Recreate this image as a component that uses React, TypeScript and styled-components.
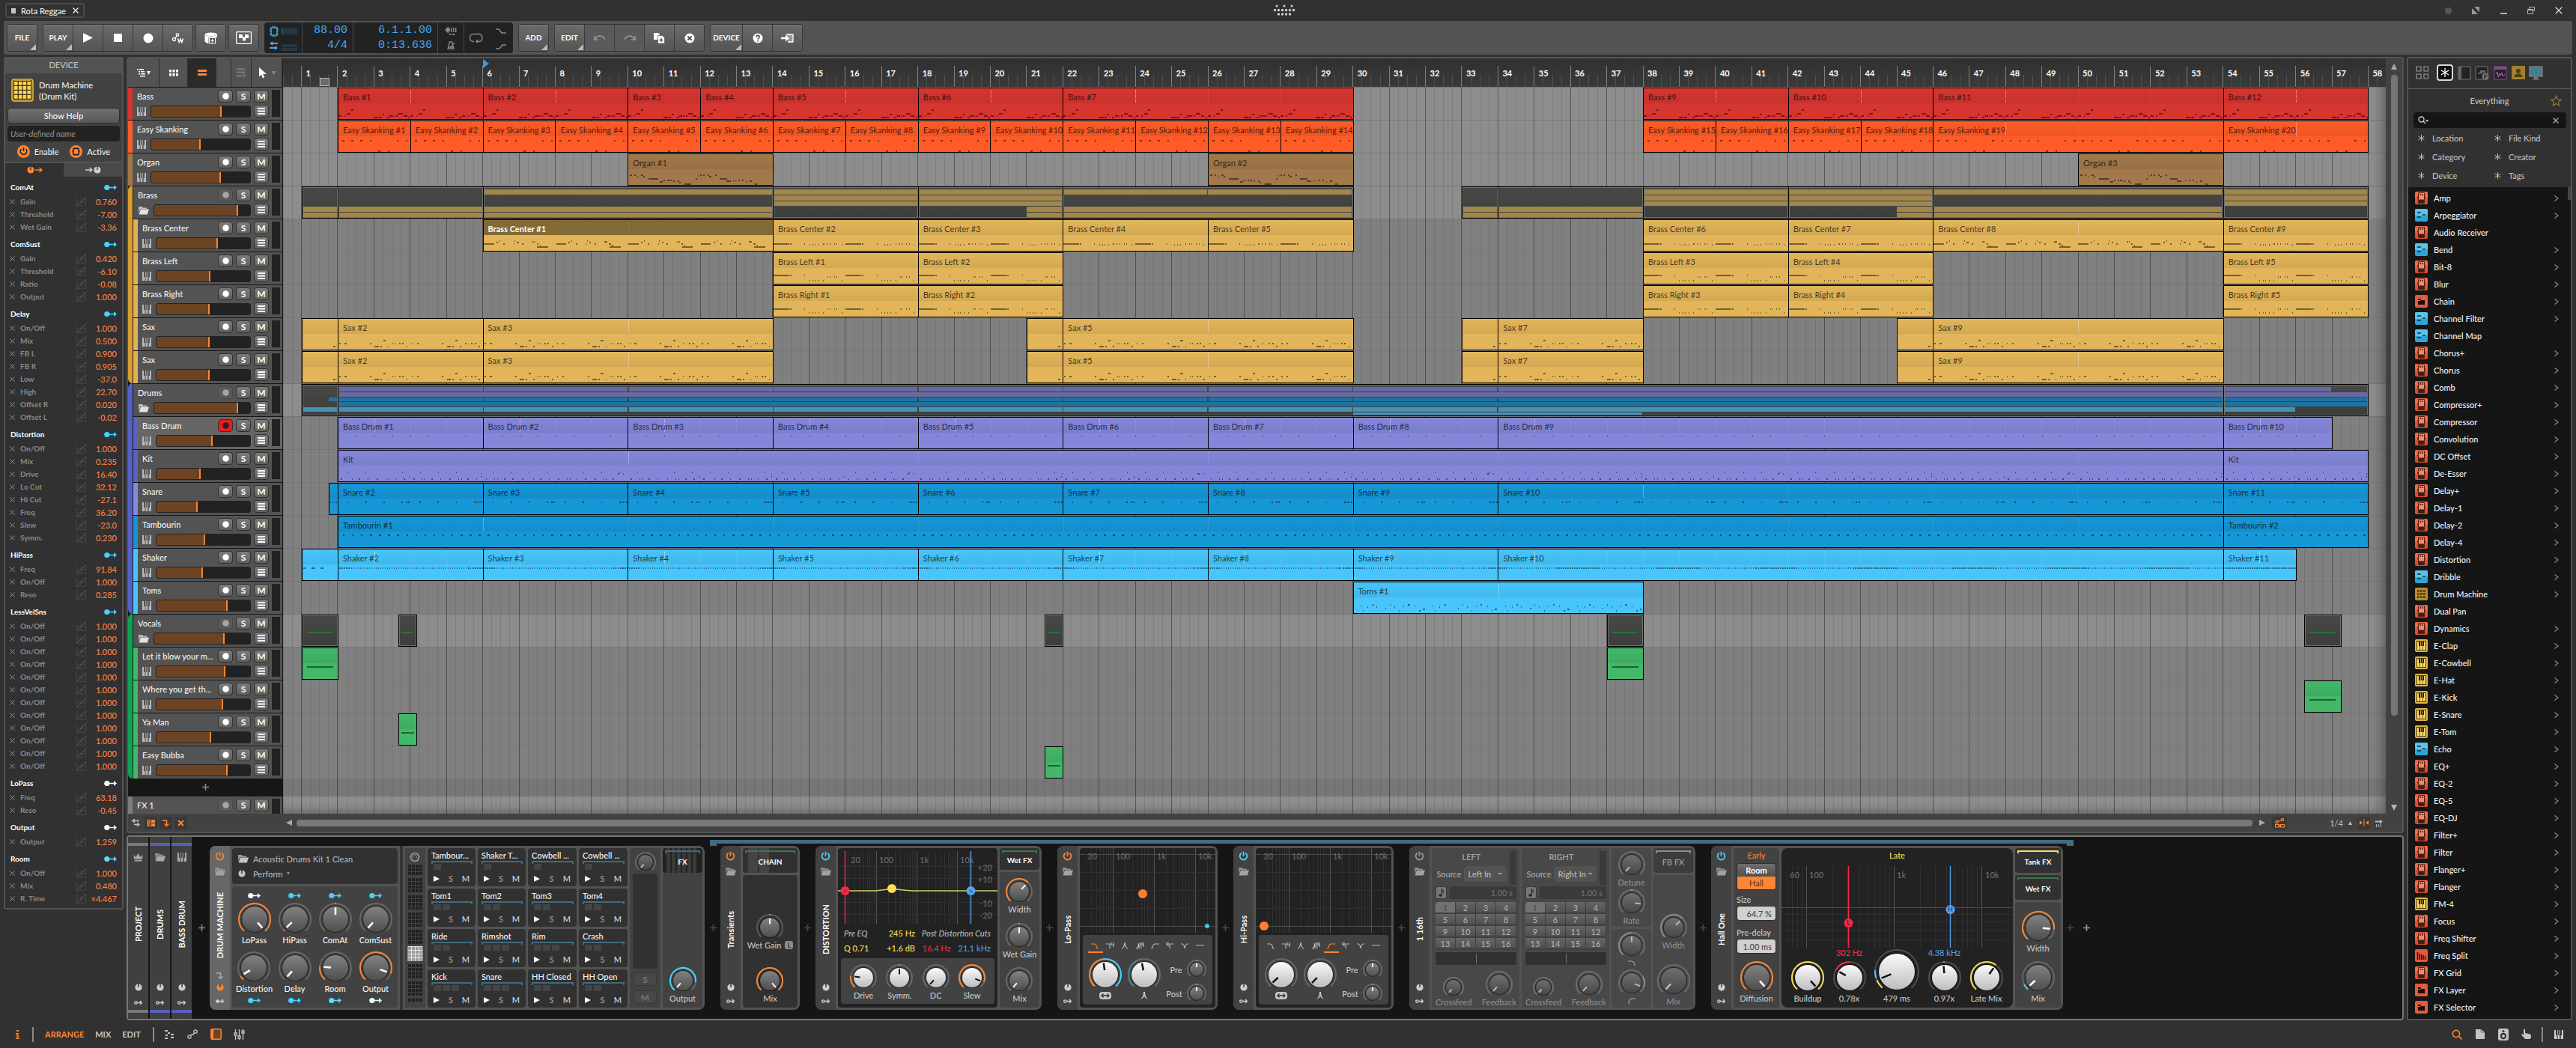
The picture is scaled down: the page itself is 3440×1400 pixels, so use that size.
import React from 'react';
import styled, { createGlobalStyle, css } from 'styled-components';

/* ------------------------------------------------------------------ */
/* Base                                                                */
/* ------------------------------------------------------------------ */

const Global = createGlobalStyle`
  *, *::before, *::after { box-sizing: border-box; }
  body { margin: 0; background: #313131; }
  body, button, input, select, label {
    font-family: Lato, "Open Sans", sans-serif;
    font-size: 11px;
    font-weight: 500;
    line-height: 13px;
    color: #e6e6e6;
  }
  button, input, select { margin: 0; padding: 0; border: 0; background: none; outline: 0; }
  button { cursor: pointer; display: inline-flex; align-items: center; justify-content: center; }
  svg { display: block; flex: none; }
  ul { margin: 0; padding: 0; list-style: none; }
  h2, h3 { margin: 0; font-size: 11px; line-height: 13px; font-weight: 500; }
`;

const ORANGE = '#ff8532';
const CYAN = '#44d3ff';
const BLUE = '#43a9f5';
const FRAME = '#535353';

const Page = styled.div`
  height: 100vh;
  display: flex;
  flex-direction: column;
  background: #313131;
  overflow: hidden;
`;

/* ------------------------------------------------------------------ */
/* Icons                                                               */
/* ------------------------------------------------------------------ */

type IconProps = { c?: string; s?: number };

const Power = ({ c = ORANGE }: IconProps) => (
  <svg width="13" height="13" viewBox="0 0 13 13" fill="none" stroke={c} strokeWidth="1.8">
    <path d="M3.8 2.6a4.9 4.9 0 1 0 5.4 0M6.5 .8v5.6" />
  </svg>
);
const Folder = ({ c = '#a9a9a9' }: IconProps) => (
  <svg width="15" height="12" viewBox="0 0 15 12">
    <path d="M1 1h5l1 1.5h5V4H3.5L1.5 10z" fill={c} opacity=".75" />
    <path d="M4 4.5h11L12.8 11.5H1.6z" fill={c} />
  </svg>
);
const Piano = ({ c = '#b8b8b8' }: IconProps) => (
  <svg width="12" height="12" viewBox="0 0 12 12">
    <path d="M0 0h2v7h1.3v5H0zM4.3 7V0h.9v7h1.6V0h.9v7h-.6v5H4.9V7zM10 0h2v12H8.7V7H10z" fill={c} />
    <path d="M3.6 7h.6v5h-.6zM4.9 7h2.2v5H4.9z" fill={c} />
  </svg>
);
const MiniKnob = ({ c = '#cfcfcf' }: IconProps) => (
  <svg width="10" height="10" viewBox="0 0 10 10">
    <circle cx="5" cy="5" r="4.6" fill={c} />
    <path d="M5 0v5" stroke="#333" strokeWidth="1.4" />
  </svg>
);
const ModArrow = ({ c = CYAN }: IconProps) => (
  <svg width="17" height="9" viewBox="0 0 17 9">
    <circle cx="3.8" cy="4.5" r="3.6" fill={c} />
    <path d="M7 3.8h6V1l4 3.5-4 3.5V5.2H7z" fill={c} />
  </svg>
);
const ModMini = ({ c = '#cfcfcf', filled = false }: IconProps & { filled?: boolean }) => (
  <svg width="11" height="7" viewBox="0 0 11 7" fill="none" stroke={c} strokeWidth="1.3">
    <circle cx="2.4" cy="3.5" r="1.7" fill={filled ? c : 'none'} />
    <path d="M4.2 3.5h6M8 1l2.4 2.5L8 6" />
  </svg>
);
const CornerArrow = ({ c = '#b5b5b5' }: IconProps) => (
  <svg width="11" height="11" viewBox="0 0 11 11" fill="none" stroke={c} strokeWidth="1.5">
    <path d="M1 2h5.5v7M3.6 6.4l2.9 3 2.9-3" />
  </svg>
);
const PlusIcon = ({ c = '#8b8b8b' }: IconProps) => (
  <svg width="9" height="9" viewBox="0 0 9 9" stroke={c} strokeWidth="1.6">
    <path d="M4.5 0v9M0 4.5h9" />
  </svg>
);
const Tri = ({ d, c = '#a8a8a8', s = 8 }: IconProps & { d: 'u' | 'd' | 'l' | 'r' }) => {
  const p = { u: 'M0 8L4 0l4 8z', d: 'M0 0h8L4 8z', l: 'M8 0v8L0 4z', r: 'M0 0l8 4-8 4z' }[d];
  return <svg width={s} height={s} viewBox="0 0 8 8"><path d={p} fill={c} /></svg>;
};
const Cross = ({ c = '#9a9a9a', s = 8 }: IconProps) => (
  <svg width={s} height={s} viewBox="0 0 8 8" stroke={c} strokeWidth="1.1"><path d="M.5.5l7 7M7.5.5l-7 7" /></svg>
);
const Aster = ({ c = '#c2c2c2', s = 10 }: IconProps) => (
  <svg width={s} height={s} viewBox="0 0 10 10" stroke={c} strokeWidth="1.1"><path d="M5 0v10M.7 2.5l8.6 5M9.3 2.5l-8.6 5" /></svg>
);

/* ------------------------------------------------------------------ */
/* Title bar                                                           */
/* ------------------------------------------------------------------ */

const TitleBar = styled.header`
  flex: none;
  height: 28px;
  display: grid;
  grid-template-columns: 1fr auto 1fr;
  align-items: center;
  padding: 0 17px 0 7px;
`;
const ProjectTab = styled.div`
  justify-self: start;
  display: flex;
  align-items: center;
  gap: 7px;
  height: 20px;
  padding: 0 4px 0 6px;
  border: 2px solid #4a4a4a;
  border-radius: 4px;
  color: #f0f0f0;
`;
const TabDot = styled.span`
  width: 6px;
  height: 7px;
  background: #c8c8c8;
`;
const WindowButtons = styled.div`
  justify-self: end;
  display: flex;
  align-items: center;
  gap: 25px;
`;
const IconButton = styled.button`
  min-width: 12px;
  height: 14px;
`;

const Title = () => (
  <TitleBar>
    <ProjectTab>
      <TabDot />
      <span>Rota Reggae</span>
      <IconButton aria-label="Close project"><Cross c="#fff" /></IconButton>
    </ProjectTab>
    <svg width="30" height="16" viewBox="0 0 30 16" fill="#d0d0d0">
      {[4, 14, 24].map(x => <circle key={'a' + x} cx={x + 1} cy="2" r="1.5" />)}
      {[0, 5, 10, 15, 20, 25].map(x => <circle key={'b' + x} cx={x + 2.5} cy="7.5" r="1.7" />)}
      {[5, 10, 15, 20].map(x => <circle key={'c' + x} cx={x + 2.5} cy="13" r="1.7" />)}
    </svg>
    <WindowButtons>
      <IconButton aria-label="Status"><svg width="9" height="9"><circle cx="4.5" cy="4.5" r="4.5" fill="#555" /></svg></IconButton>
      <IconButton aria-label="Full screen"><svg width="10" height="10" viewBox="0 0 10 10" fill="#9a9a9a"><path d="M3 0h7v7zM0 2l8 8H0z" /></svg></IconButton>
      <IconButton aria-label="Minimize"><svg width="9" height="10"><path d="M0 8h9v2H0z" fill="#b5b5b5" /></svg></IconButton>
      <IconButton aria-label="Restore"><svg width="10" height="10" viewBox="0 0 10 10" fill="none" stroke="#b5b5b5"><path d="M2.5 3V.5h7v5H8M.5 3.5h7v6h-7zM.5 4.5h7" /></svg></IconButton>
      <IconButton aria-label="Close"><Cross c="#e8e8e8" s={10} /></IconButton>
    </WindowButtons>
  </TitleBar>
);

/* ------------------------------------------------------------------ */
/* Transport toolbar                                                   */
/* ------------------------------------------------------------------ */

const Bar = styled.div`
  flex: none;
  display: flex;
  align-items: center;
  gap: 7px;
  height: 45px;
  margin: 0 5px 3px;
  padding: 0 4px;
  background: ${FRAME};
  border-radius: 3px;
`;
const Near = styled.div`
  display: flex;
  gap: 3px;
`;
const ToolGroup = styled.div`
  display: flex;
  height: 37px;
  border: solid #333;
  border-width: 1px 0;
  border-radius: 4px;
  overflow: hidden;
`;
const Tool = styled.button<{ $menu?: boolean; $dim?: boolean; $w?: number }>`
  position: relative;
  width: ${p => p.$w ?? 40}px;
  background: ${p => (p.$dim ? '#5a5a5a' : 'linear-gradient(#777 0, #6a6a6a 2px, #555)')};
  border-right: 1px solid #3a3a3a;
  color: #fff;
  font-size: 10px;
  font-weight: 700;
  &:first-child { border-left: 1px solid #3a3a3a; width: ${p => (p.$w ?? 40) + 1}px; }
  ${p => p.$menu && css`
    &::after {
      content: '';
      position: absolute;
      right: 1px;
      bottom: 1px;
      border: 4px solid transparent;
      border-right-color: #bbb;
      border-bottom-color: #bbb;
    }
  `}
`;
const Display = styled.div`
  display: grid;
  grid-template-columns: 50px 68px 113px 35px 1fr;
  width: 332px;
  height: 41px;
  background: #222;
  border-radius: 4px;
  font-family: "Liberation Mono", monospace;
  font-size: 15px;
  line-height: 20px;
  color: ${BLUE};
`;
const Cell = styled.div<{ $center?: boolean }>`
  display: flex;
  flex-direction: column;
  justify-content: center;
  align-items: ${p => (p.$center ? 'center' : 'flex-end')};
  gap: ${p => (p.$center ? 8 : 0)}px;
  padding-right: ${p => (p.$center ? 0 : 7)}px;
  border-left: 1px solid #484848;
  &:first-child { border-left: 0; }
`;
const LoopCell = styled.div`
  display: grid;
  grid-template-columns: 1fr 1fr;
  justify-items: center;
  align-items: center;
  border-left: 1px solid #484848;
`;

const Toolbar = () => (
  <Bar>
    <ToolGroup><Tool $menu>FILE</Tool></ToolGroup>
    <Near>
      <ToolGroup>
        <Tool $menu>PLAY</Tool>
        <Tool aria-label="Play"><Tri d="r" c="#fff" s={13} /></Tool>
        <Tool aria-label="Stop"><svg width="11" height="11"><path d="M0 0h11v11H0z" fill="#fff" /></svg></Tool>
        <Tool aria-label="Record"><svg width="14" height="14"><circle cx="7" cy="7" r="6.5" fill="#fff" /></svg></Tool>
        <Tool aria-label="Automation write">
          <svg width="16" height="14" viewBox="0 0 16 14" fill="none" stroke="#fff" strokeWidth="1.3">
            <circle cx="2.5" cy="8.5" r="2" /><circle cx="7" cy="2.5" r="1.7" /><path d="M4 7l2-3" />
            <path d="M7.5 7.5l1.7 5L11 8l1.8 4.5 1.7-5" strokeWidth="1.5" />
          </svg>
        </Tool>
      </ToolGroup>
      <ToolGroup>
        <Tool aria-label="Overdub">
          <svg width="18" height="16" viewBox="0 0 18 16">
            <path d="M.5 3.5v9c2 1.8 4 2.5 5 2.6V7H17V3.5C14.5 6 3 6 .5 3.5z" fill="#fff" />
            <ellipse cx="8.8" cy="2.8" rx="8.3" ry="2.3" fill="#fff" />
            <path d="M6.5 7.5h8v7.5h-8z" fill="#555" stroke="#fff" /><path d="M10.5 9v4.5M8.3 11.3h4.5" stroke="#fff" strokeWidth="1.3" />
          </svg>
        </Tool>
      </ToolGroup>
      <ToolGroup>
        <Tool aria-label="Dashboard">
          <svg width="21" height="17" viewBox="0 0 21 17"><rect x=".6" y=".6" width="19.8" height="15.8" rx="1" fill="none" stroke="#fff" strokeWidth="1.2" /><path d="M4 4h5v3.5h3V4h5v5h-4v3.5H9V9H4z" fill="#fff" /></svg>
        </Tool>
      </ToolGroup>
    </Near>
    <Display>
      <Cell $center>
        <svg width="38" height="34" viewBox="0 0 38 34">
          <rect x="3" y="3" width="8" height="10" fill="none" stroke={BLUE} strokeWidth="1.5" />
          <path d="M5 .5v15M7 .5v15M9 .5v15" stroke={BLUE} strokeDasharray="2 11" />
          <path d="M1 5h12M1 8h12M1 11h12" stroke={BLUE} strokeDasharray="2 8" />
          <path d="M17 3h21v9H17zM17 25h21v4H17zM17 30h21v4H17z" fill="#263743" /><path d="M17 3h1v9h-1z" fill="#2a6f80" />
          <path d="M5 21L1 24l4 3v-2h7v-2H5zM8 27v2H1v2h7v2l4-3z" fill={BLUE} />
        </svg>
      </Cell>
      <Cell><span>88.00</span><span>4/4</span></Cell>
      <Cell><span>6.1.1.00</span><span>0:13.636</span></Cell>
      <Cell $center>
        <svg width="16" height="12" viewBox="0 0 16 12" fill="#8a8a8a"><path d="M0 5l5-5v3h2v4H5v3zM8 2h1.5v6H8zM11 2h1.5v6H11zM14 2h1.5v6H14zM6 10h2v2H6zM10 10h3v2h-3z" /></svg>
        <svg width="10" height="11" viewBox="0 0 10 11" fill="none" stroke="#8a8a8a" strokeWidth="1.3"><path d="M3.5 1L1 10h8L6.5 1zM4.5 9L10 2M1.5 8h7" /></svg>
      </Cell>
      <LoopCell>
        <svg width="18" height="13" viewBox="0 0 18 13" fill="none" stroke="#8a8a8a" strokeWidth="1.5"><path d="M6 11.5H5a4.5 5 0 0 1 0-10h8a4 5 0 0 1 0 10H9M11.5 9L9 11.5 11.5 13" /></svg>
        <svg width="14" height="34" viewBox="0 0 14 34" fill="none" stroke="#8a8a8a" strokeWidth="1.5"><path d="M0 5h4l4 5h6M0 31h5l4-5h5" /></svg>
      </LoopCell>
    </Display>
    <ToolGroup><Tool $menu>ADD</Tool></ToolGroup>
    <ToolGroup>
      <Tool $menu>EDIT</Tool>
      <Tool $dim aria-label="Undo"><svg width="16" height="9" viewBox="0 0 16 9" fill="none" stroke="#999" strokeWidth="1.5"><path d="M1 2v5h5M1.5 6C5 1 11 0 15 6.5" /></svg></Tool>
      <Tool $dim aria-label="Redo"><svg width="16" height="9" viewBox="0 0 16 9" fill="none" stroke="#999" strokeWidth="1.5"><path d="M15 2v5h-5M14.5 6C11 1 5 0 1 6.5" /></svg></Tool>
      <Tool aria-label="Duplicate"><svg width="15" height="14" viewBox="0 0 15 14"><path d="M0 0h6l2 2v7H0z" fill="#fff" /><path d="M5.5 3.5h6l3 3v7.5h-9z" fill="#fff" stroke="#666" strokeWidth=".8" /><path d="M10 7v5M7.5 9.5h5" stroke="#555" strokeWidth="1.3" /></svg></Tool>
      <Tool aria-label="Delete"><svg width="14" height="14" viewBox="0 0 14 14"><circle cx="7" cy="7" r="6.5" fill="#fff" /><path d="M4.3 4.3l5.4 5.4M9.7 4.3L4.3 9.7" stroke="#444" strokeWidth="1.8" /></svg></Tool>
    </ToolGroup>
    <ToolGroup>
      <Tool $menu $w={43}>DEVICE</Tool>
      <Tool aria-label="Help"><svg width="14" height="14" viewBox="0 0 14 14"><circle cx="7" cy="7" r="6.5" fill="#fff" /><path d="M4.8 5.5c0-3 4.6-2.7 4.3-.2C9 6.8 7 6.8 7 8.6M7 10v1.5" fill="none" stroke="#444" strokeWidth="1.6" /></svg></Tool>
      <Tool aria-label="Insert device"><svg width="17" height="12" viewBox="0 0 17 12"><path d="M7 1h9v10H9" fill="#999" stroke="#fff" strokeWidth="1.3" /><path d="M0 4.8h6V1.5l5 4.5-5 4.5V7.2H0z" fill="#fff" /></svg></Tool>
    </ToolGroup>
  </Bar>
);

/* ------------------------------------------------------------------ */
/* Inspector                                                           */
/* ------------------------------------------------------------------ */

const Main = styled.main`
  flex: 1;
  min-height: 0;
  display: grid;
  grid-template-columns: 160px minmax(0, 1fr) 221px;
  gap: 4px;
  padding: 0 5px;
`;
const Inspector = styled.aside`
  align-self: start;
  border: 2px solid ${FRAME};
  border-radius: 3px;
  padding-bottom: 4px;
`;
const InspectorTitle = styled.h2`
  height: 20px;
  background: ${FRAME};
  color: #c4c4c4;
  text-align: center;
  line-height: 18px;
`;
const InspectorTop = styled.div`
  display: flex;
  flex-direction: column;
  gap: 3px;
  padding: 7px 3px 3px;
  background: #424242;
  border-bottom: 2px solid ${FRAME};
`;
const DeviceIdent = styled.div`
  display: flex;
  align-items: center;
  gap: 7px;
  padding: 0 5px 5px;
  line-height: 15px;
  color: #f0f0f0;
`;
const HelpButton = styled.button`
  height: 21px;
  background: linear-gradient(#707070, #575757);
  border: 1px solid #2e2e2e;
  border-radius: 4px;
  color: #f4f4f4;
`;
const NameInput = styled.input`
  height: 21px;
  padding: 0 4px;
  background: #222;
  border-radius: 4px;
  font-style: italic;
  &::placeholder { color: #8c8c8c; opacity: 1; }
`;
const Switches = styled.div`
  display: flex;
  justify-content: center;
  gap: 15px;
  padding: 2px 0;
`;
const SwitchButton = styled.button`
  gap: 6px;
  color: #ededed;
`;
const InspectorTabs = styled.div`
  display: grid;
  grid-template-columns: 1fr 1fr;
`;
const InspectorTab = styled.button<{ $on?: boolean }>`
  height: 18px;
  gap: 1px;
  background: ${p => (p.$on ? '#313131' : '#494949')};
`;
const ParamHead = styled.h3`
  display: flex;
  justify-content: space-between;
  align-items: center;
  height: 25px;
  padding: 3px 7px 0;
  font-size: 10px;
  font-weight: 700;
  color: #fff;
`;
const ParamRow = styled.li`
  display: grid;
  grid-template-columns: 14px 1fr 14px 40px;
  align-items: center;
  height: 17px;
  padding: 0 7px 0 6px;
  font-size: 10px;
  font-weight: 700;
  color: #8a8a8a;
`;
const ParamValue = styled.span`
  text-align: right;
  font-size: 11px;
  font-weight: 500;
  color: #ff8142;
`;

const PARAMS: [string, string, [string, string][]][] = [
  ['ComAt', CYAN, [['Gain', '0.760'], ['Threshold', '-7.00'], ['Wet Gain', '-3.36']]],
  ['ComSust', CYAN, [['Gain', '0.420'], ['Threshold', '-6.10'], ['Ratio', '-0.08'], ['Output', '1.000']]],
  ['Delay', CYAN, [['On/Off', '1.000'], ['Mix', '0.500'], ['FB L', '0.900'], ['FB R', '0.905'], ['Low', '-37.0'], ['High', '22.70'], ['Offset R', '0.020'], ['Offset L', '-0.02']]],
  ['Distortion', CYAN, [['On/Off', '1.000'], ['Mix', '0.235'], ['Drive', '16.40'], ['Lo Cut', '32.12'], ['Hi Cut', '-27.1'], ['Freq', '36.20'], ['Slew', '-23.0'], ['Symm.', '0.230']]],
  ['HiPass', CYAN, [['Freq', '91.84'], ['On/Off', '1.000'], ['Reso', '0.285']]],
  ['LessVelSns', CYAN, Array.from({ length: 12 }, () => ['On/Off', '1.000'] as [string, string])],
  ['LoPass', '#fff', [['Freq', '63.18'], ['Reso', '-0.45']]],
  ['Output', '#e6faff', [['Output', '1.259']]],
  ['Room', '#5fd9ff', [['On/Off', '1.000'], ['Mix', '0.480'], ['R. Time', '×4.467']]],
];

const DrumIcon = () => (
  <svg width="30" height="31" viewBox="0 0 30 31">
    <rect x="1" y="1" width="28" height="29" rx="3" fill="#3a2f10" stroke="#e9bd45" strokeWidth="1.5" />
    {[0, 1, 2, 3].map(r => [0, 1, 2, 3].map(c => <rect key={`${r}${c}`} x={4 + c * 5.8} y={4 + r * 6} width="4.6" height="4.8" fill="#ffd35a" />))}
    <rect x="2.5" y="2.5" width="25" height="26" rx="2" fill="none" stroke="#c79a2d" />
  </svg>
);

const InspectorPanel = () => (
  <Inspector>
    <InspectorTitle>DEVICE</InspectorTitle>
    <InspectorTop>
      <DeviceIdent><DrumIcon /><span>Drum Machine<br />(Drum Kit)</span></DeviceIdent>
      <HelpButton>Show Help</HelpButton>
      <NameInput placeholder="User-defined name" aria-label="User-defined name" />
      <Switches>
        <SwitchButton>
          <svg width="17" height="17" viewBox="0 0 17 17"><circle cx="8.5" cy="8.5" r="8.5" fill={ORANGE} /><path d="M5.5 5a4.3 4.3 0 1 0 6 0M8.5 3v5" fill="none" stroke="#222" strokeWidth="1.5" /></svg>
          Enable
        </SwitchButton>
        <SwitchButton>
          <svg width="17" height="17" viewBox="0 0 17 17"><circle cx="8.5" cy="8.5" r="8.5" fill={ORANGE} /><rect x="5" y="4.5" width="7" height="8" fill="none" stroke="#222" strokeWidth="1.4" /><path d="M6.5 3v11M8.5 3v11M10.5 3v11" stroke="#222" strokeDasharray="1.5 8" /><path d="M3.5 6.5h10M3.5 8.5h10M3.5 10.5h10" stroke="#222" strokeDasharray="1.5 7" /></svg>
          Active
        </SwitchButton>
      </Switches>
    </InspectorTop>
    <InspectorTabs>
      <InspectorTab $on aria-label="Outgoing"><MiniKnob c={ORANGE} /><svg width="10" height="8" fill="none" stroke={ORANGE} strokeWidth="1.4"><path d="M0 4h8M5.5 1L9 4 5.5 7" /></svg></InspectorTab>
      <InspectorTab aria-label="Incoming"><svg width="10" height="8" fill="none" stroke="#cfcfcf" strokeWidth="1.4"><path d="M0 4h8M5.5 1L9 4 5.5 7" /></svg><MiniKnob /></InspectorTab>
    </InspectorTabs>
    {PARAMS.map(([name, color, rows]) => (
      <section key={name}>
        <ParamHead>{name}<ModArrow c={color} /></ParamHead>
        <ul>
          {rows.map(([label, value], i) => (
            <ParamRow key={i}>
              <Cross s={7} />
              <span>{label}</span>
              <svg width="13" height="13" viewBox="0 0 13 13" stroke="#4b4b4b" fill="none"><path d="M.5.5v12h12V.5M.5 6.5h12M6.5 3v9" opacity=".7" /><path d="M.5 12.5l12-12" stroke="#5e5e5e" /></svg>
              <ParamValue>{value}</ParamValue>
            </ParamRow>
          ))}
        </ul>
      </section>
    ))}
  </Inspector>
);

/* ------------------------------------------------------------------ */
/* Arrangement data                                                    */
/* ------------------------------------------------------------------ */

type Note = [number, number, number];
type Clip = { from: number; to: number; name?: string; selected?: boolean; dark?: boolean };
type Track = {
  name: string; stripe: string; level: number; color: string;
  clips: Clip[]; notes?: Note[]; period?: number; loop?: number;
  child?: boolean; group?: boolean; armed?: boolean; kids?: Track[];
};

const FIRST_BAR = 0.494;
const BARS = 57.992;
const pct = (bar: number) => ((bar - FIRST_BAR) / BARS) * 100;

/* Consecutive clips: run('Bass', 1, [2, 6, 10]) gives #1 at 2–6 and #2 at 6–10. */
const run = (name: string, first: number, edges: number[]): Clip[] =>
  edges.slice(0, -1).map((from, i) => ({ from, to: edges[i + 1], name: `${name} #${first + i}` }));
const every = (step: number, start: number, end: number, w: number, y: number): Note[] =>
  Array.from({ length: Math.round((end - start) / step) }, (_, i) => [start + i * step, w, y] as Note);

const N_BASS: Note[] = [[0, .08, 36], [.16, .03, 36], [.23, .1, 33], [.35, .06, 28], [.98, .13, 38], [1.13, .07, 38], [1.22, .05, 34], [1.35, .06, 38], [1.42, .09, 36], [1.53, .03, 36], [1.6, .04, 36], [1.67, .12, 33], [1.8, .1, 36], [1.94, .04, 38]];
const N_SKANK: Note[] = [[.11, .05, 25], [.36, .05, 25], [.61, .05, 25], [.87, .05, 25], [1.62, .05, 25], [1.88, .05, 25], [1.11, .05, 39], [1.37, .05, 39]];
const N_ORGAN: Note[] = [[.05, .05, 27], [.16, .05, 27], [.24, .03, 29], [.36, .05, 27], [.42, .03, 29], [.56, .27, 32], [.87, .08, 36], [.97, .02, 34], [1, .02, 34], [1.07, .05, 34], [1.15, .05, 34], [1.25, .03, 35], [1.37, .05, 35], [1.42, .03, 37], [1.55, .19, 39], [1.87, .04, 32], [1.94, .02, 28], [2, .04, 27], [2.08, .04, 27], [2.2, .04, 27], [2.25, .05, 29], [2.4, .05, 27], [2.54, .21, 32], [2.73, .11, 35], [2.9, .02, 35], [2.96, .02, 34], [3.05, .04, 34], [3.16, .04, 34], [3.25, .03, 36], [3.37, .06, 35], [3.5, .08, 39]];
const N_CENTER_LONG: Note[] = [[0, .28, 31], [.35, .04, 29], [.43, .02, 27], [.54, .04, 31], [.82, .02, 31], [.85, .02, 27], [.92, .05, 29], [1.06, .04, 31], [1.34, .05, 28], [1.4, .02, 28], [1.46, .05, 31], [1.55, .03, 33], [1.48, .3, 35]];
const N_CENTER: Note[] = [[0, .43, 31], [.46, .03, 31], [.86, .02, 31], [1, .02, 32], [1.07, .02, 32], [1.15, .02, 32], [1.24, .02, 32], [1.38, .03, 31], [1.48, .02, 31], [1.56, .02, 31], [1.68, .02, 31], [1.75, .02, 31], [1.88, .03, 32]];
const N_LEFT: Note[] = [[0, .43, 29], [.46, .03, 29], [.86, .02, 29], [.98, .02, 36], [1.07, .02, 36], [1.15, .02, 36], [1.24, .02, 36], [1.38, .02, 36], [1.5, .02, 31], [1.56, .02, 31], [1.68, .02, 31], [1.75, .02, 31], [1.88, .02, 36]];
const N_RIGHT: Note[] = N_LEFT.map(([x, w, y]) => [x, w, y === 36 ? 35 : 30]);
const N_SAX: Note[] = [[.03, .03, 32], [.17, .05, 32], [.87, .04, 32], [1, .12, 36], [1.16, .04, 36], [1.24, .07, 28], [1.37, .03, 36], [1.5, .02, 32], [1.56, .02, 32], [1.68, .04, 32], [1.77, .04, 32], [1.88, .04, 36]];
const N_KIT: Note[] = [...every(.5, .25, 8, .02, 28), ...every(.5, .06, 8, .04, 37), ...every(.5, .3, 8, .02, 37), ...every(1, .38, 8, .02, 37), ...every(1, .8, 8, .03, 37), ...every(2, 1.94, 8, .02, 34), [3.95, .02, 30], [7.7, .05, 30], [7.86, .02, 30]];
const N_SNARE: Note[] = [[.25, .03, 24], [.75, .03, 24], [1.25, .03, 24], [1.75, .03, 24], [1.87, .04, 24], [1.94, .04, 24], [2.25, .03, 24], [2.75, .03, 24], [3.25, .03, 24], [3.75, .04, 24], [3.82, .03, 24], [3.87, .03, 24], [3.94, .04, 24]];
const N_TOMS: Note[] = [[.18, .02, 31], [.24, .02, 37], [.37, .02, 32], [.5, .04, 29], [.62, .02, 32], [.87, .03, 34], [1, .02, 29], [1.12, .02, 32], [1.25, .02, 37], [1.37, .02, 31], [1.5, .05, 29], [1.68, .02, 31], [1.8, .04, 37], [1.9, .06, 35]];
const N_VOX: Note[] = [[.12, .74, 24]];

const GOLD = '#e2b55a';
const VIOLET = '#8487d9';
const SEA = '#1697d8';
const SKY = '#47c5fc';
const GREEN = '#42b868';

const four = [2, 6, 10, 14, 18, 22, 26, 30, 34, 54];
const saxClips: Clip[] = [
  { from: 1, to: 2 }, { from: 2, to: 6, name: 'Sax #2' }, { from: 6, to: 14, name: 'Sax #3' },
  { from: 21, to: 22 }, { from: 22, to: 30, name: 'Sax #5' },
  { from: 33, to: 34 }, { from: 34, to: 38, name: 'Sax #7' },
  { from: 45, to: 46 }, { from: 46, to: 54, name: 'Sax #9' },
];
const dark = (edges: [number, number][]): Clip[] => edges.map(([from, to]) => ({ from, to, dark: true }));

const brassKids: Track[] = [
  { name: 'Brass Center', stripe: '#e0b157', level: 65, color: GOLD, notes: N_CENTER, period: 2, loop: 4, child: true,
    clips: [{ from: 6, to: 14, name: 'Brass Center #1', selected: true }, ...run('Brass Center', 2, [14, 18, 22, 26, 30]), ...run('Brass Center', 6, [38, 42, 46, 54, 58])] },
  { name: 'Brass Left', stripe: '#e0b157', level: 57, color: GOLD, notes: N_LEFT, period: 2, child: true,
    clips: [...run('Brass Left', 1, [14, 18, 22]), ...run('Brass Left', 3, [38, 42, 46]), ...run('Brass Left', 5, [54, 58])] },
  { name: 'Brass Right', stripe: '#e0b157', level: 56, color: GOLD, notes: N_RIGHT, period: 2, child: true,
    clips: [...run('Brass Right', 1, [14, 18, 22]), ...run('Brass Right', 3, [38, 42, 46]), ...run('Brass Right', 5, [54, 58])] },
  { name: 'Sax', stripe: '#e0b157', level: 56, color: GOLD, notes: N_SAX, period: 2, loop: 4, child: true, clips: saxClips },
  { name: 'Sax', stripe: '#e0b157', level: 56, color: GOLD, notes: N_SAX, period: 2, loop: 4, child: true, clips: saxClips },
];
const drumKids: Track[] = [
  { name: 'Bass Drum', stripe: '#5a62be', level: 59, color: VIOLET, notes: every(.5, .5, 4, .02, 24), period: 4, loop: 1, child: true, armed: true,
    clips: [...run('Bass Drum', 1, four), { from: 54, to: 57, name: 'Bass Drum #10' }] },
  { name: 'Kit', stripe: '#5a62be', level: 46, color: VIOLET, notes: N_KIT, period: 8, loop: 8, child: true,
    clips: [{ from: 2, to: 54, name: 'Kit' }, { from: 54, to: 58, name: 'Kit' }] },
  { name: 'Snare', stripe: '#8a88da', level: 43, color: SEA, notes: N_SNARE, period: 4, loop: 4, child: true,
    clips: [{ from: 1.75, to: 2 }, ...run('Snare', 2, four), { from: 54, to: 58, name: 'Snare #11' }] },
  { name: 'Tambourin', stripe: '#1794d3', level: 51, color: SEA, notes: every(.25, .12, 4, .05, 24), period: 4, loop: 4, child: true,
    clips: run('Tambourin', 1, [2, 54, 58]) },
  { name: 'Shaker', stripe: SKY, level: 49, color: SKY, notes: every(.0625, .03, 1, .03, 24), period: 1, loop: 1, child: true,
    clips: [{ from: 1, to: 2 }, ...run('Shaker', 2, four), { from: 54, to: 56, name: 'Shaker #11' }] },
  { name: 'Toms', stripe: SKY, level: 76, color: SKY, notes: N_TOMS, period: 2, loop: 4, child: true, clips: run('Toms', 1, [30, 38]) },
];
const vocalKids: Track[] = [
  { name: 'Let it blow your m...', stripe: GREEN, level: 73, color: GREEN, notes: N_VOX, period: 1, child: true, clips: [{ from: 1, to: 2 }, { from: 37, to: 38 }] },
  { name: 'Where you get th...', stripe: GREEN, level: 71, color: GREEN, notes: N_VOX, period: 1, child: true, clips: [{ from: 56.24, to: 57.24 }] },
  { name: 'Ya Man', stripe: GREEN, level: 58, color: GREEN, notes: N_VOX, period: 1, child: true, clips: [{ from: 3.67, to: 4.17 }] },
  { name: 'Easy Bubba', stripe: GREEN, level: 76, color: GREEN, notes: N_VOX, period: 1, child: true, clips: [{ from: 21.5, to: 22 }] },
];

const TRACKS: Track[] = [
  { name: 'Bass', stripe: '#d5332f', level: 71, color: '#d63530', notes: N_BASS, period: 2, loop: 2,
    clips: [...run('Bass', 1, [2, 6, 10, 12, 14, 18, 22, 30]), ...run('Bass', 9, [38, 42, 46, 54, 58])] },
  { name: 'Easy Skanking', stripe: '#ff5c28', level: 49, color: '#ff5b27', notes: N_SKANK, period: 2, loop: 2,
    clips: [...run('Easy Skanking', 1, [2, 4, 6, 8, 10, 12, 14, 16, 18, 20, 22, 24, 26, 28, 30]), ...run('Easy Skanking', 15, [38, 40, 42, 44, 46, 54, 58])] },
  { name: 'Organ', stripe: '#a17747', level: 70, color: '#a2794a', notes: N_ORGAN, period: 4,
    clips: [{ from: 10, to: 14, name: 'Organ #1' }, { from: 26, to: 30, name: 'Organ #2' }, { from: 50, to: 54, name: 'Organ #3' }] },
  { name: 'Brass', stripe: '#d99c32', level: 87, color: '#a0854c', group: true, kids: brassKids,
    clips: dark([[1, 2], [2, 6], [6, 14], [14, 18], [18, 22], [22, 30], [33, 34], [34, 38], [38, 42], [42, 46], [46, 54], [54, 58]]) },
  { name: 'Drums', stripe: '#5561c2', level: 87, color: '#676aa0', group: true, kids: drumKids,
    clips: dark([[1, 2], [2, 54], [54, 58]]) },
  { name: 'Vocals', stripe: '#12a054', level: 73, color: '#2c6b41', group: true, kids: vocalKids,
    clips: dark([[1, 2], [3.67, 4.17], [21.5, 22], [37, 38], [56.24, 57.24]]) },
];

/* ------------------------------------------------------------------ */
/* Arrangement: track headers                                          */
/* ------------------------------------------------------------------ */

const Center = styled.div`
  display: flex;
  flex-direction: column;
  gap: 3px;
  min-width: 0;
  min-height: 0;
`;
const Arranger = styled.section`
  flex: 1;
  min-height: 0;
  display: grid;
  grid-template: 38px minmax(0, 1fr) 24px / 207px minmax(0, 1fr) 22px;
  background: #424242;
  border: 2px solid ${FRAME};
  border-radius: 4px;
  overflow: hidden;
`;
const ModeBar = styled.div`
  display: grid;
  grid-template-columns: 42px 38px 38px 20px 27px 1fr;
  background: #2a2a2a;
  border-right: 1px solid #222;
`;
const ModeButton = styled.button<{ $on?: boolean; $gap?: number }>`
  gap: ${p => p.$gap ?? 1}px;
  background: ${p => (p.$on ? '#2a2a2a' : '#535353')};
  border-right: 1px solid #2e2e2e;
`;
const TrackList = styled.div`
  background: #161616;
  overflow: hidden;
`;
const Group = styled.div<{ $c: string }>`
  display: flex;
  &::before {
    content: '';
    width: 7px;
    background: ${p => p.$c};
    border-radius: 6px 0 0 6px;
    border-right: 1px solid #161616;
  }
`;
const GroupBody = styled.div`
  flex: 1;
  min-width: 0;
`;
const TrackBox = styled.div<{ $c?: string; $armed?: boolean }>`
  display: grid;
  grid-template: 17px 17px / minmax(0, 1fr) 20px 20px 20px 11px;
  gap: 3px 4px;
  height: 44px;
  margin-right: 1px;
  padding: 3px 3px 0 ${p => (p.$c ? 12 : 6)}px;
  background: ${p => (p.$c ? `linear-gradient(90deg, ${p.$c} 6px, transparent 6px),` : '')} ${p => (p.$armed ? '#666' : FRAME)};
  border-top: 1px solid #161616;
`;
const TrackName = styled.span`
  align-self: center;
  white-space: nowrap;
  color: #f2f2f2;
`;
const TrackButton = styled.button<{ $dim?: boolean; $red?: boolean }>`
  height: 17px;
  background: ${p => (p.$red ? '#f01820' : p.$dim ? '#5a5a5a' : 'linear-gradient(#7c7c7c, #606060)')};
  border: 1px solid ${p => (p.$dim ? '#484848' : '#303030')};
  border-radius: 4px;
  color: #fff;
  font-size: 12px;
  font-weight: 700;
`;
const VolumeLine = styled.div`
  grid-column: 1 / 4;
  display: flex;
  align-items: center;
  gap: 6px;
`;
const Volume = styled.input`
  flex: 1;
  min-width: 0;
  height: 16px;
  appearance: none;
  background: linear-gradient(90deg, #6c4424 var(--level), #222 var(--level));
  border: 1px solid #222;
  border-radius: 3px;
  &::-webkit-slider-thumb { appearance: none; width: 2px; height: 14px; background: ${ORANGE}; }
`;
const LevelMeter = styled.span`
  grid-area: 1 / 5 / 3 / 6;
  height: 36px;
  background: #222;
`;
const AddTrack = styled.button`
  width: 100%;
  height: 23px;
`;

const Lines = () => <svg width="10" height="9" fill="#fff"><path d="M0 0h10v2H0zM0 3.5h10v2H0zM0 7h10v2H0z" /></svg>;

const Header = ({ t, stripe }: { t: Pick<Track, 'name' | 'level' | 'group' | 'armed'>; stripe?: string }) => (
  <TrackBox $c={stripe} $armed={t.armed}>
    <TrackName>{t.name}</TrackName>
    <TrackButton $dim={t.group} $red={t.armed} aria-label="Record arm">
      <svg width="9" height="9"><circle cx="4.5" cy="4.5" r="4.3" fill={t.armed ? '#222' : t.group ? '#a6a6a6' : '#fff'} /></svg>
    </TrackButton>
    <TrackButton aria-label="Solo">S</TrackButton>
    <TrackButton aria-label="Mute">M</TrackButton>
    <LevelMeter />
    <VolumeLine>
      {t.group ? <Folder c="#e2e2e2" /> : <Piano />}
      <Volume type="range" aria-label={`${t.name} volume`} defaultValue={t.level} style={{ '--level': `${t.level}%` } as React.CSSProperties} />
    </VolumeLine>
    <TrackButton aria-label="Track menu"><Lines /></TrackButton>
  </TrackBox>
);

/* ------------------------------------------------------------------ */
/* Arrangement: timeline                                               */
/* ------------------------------------------------------------------ */

const Ruler = styled.div`
  position: relative;
  background: linear-gradient(#303030, #3a3a3a);
  overflow: hidden;
`;
const FullSvg = styled.svg`
  position: absolute;
  inset: 0;
  width: 100%;
  height: 100%;
  pointer-events: none;
`;
const GridSvg = styled(FullSvg)`
  z-index: 1;
`;
const BarNumber = styled.span`
  position: absolute;
  top: 13px;
  padding-left: 6px;
  color: #fff;
  font-weight: 700;
`;
const Playhead = styled.span`
  position: absolute;
  top: 1px;
  border: 6px solid transparent;
  border-left: 8px solid #3d9be0;
  border-right: 0;
`;
const CueMark = styled.span`
  position: absolute;
  top: 26px;
  width: 13px;
  height: 11px;
  background: #6a6a6a;
  border: 1px solid #b5b5b5;
`;
const Timeline = styled.div`
  position: relative;
  background: #8c8c8c;
  overflow: hidden;
  &::after {
    content: '';
    position: absolute;
    inset: 0;
    z-index: 3;
    pointer-events: none;
    box-shadow: inset -16px -14px 14px -12px rgba(0, 0, 0, .35);
  }
`;
const Lane = styled.div<{ $child?: boolean; $h?: number; $bg?: string }>`
  position: relative;
  height: ${p => p.$h ?? 44}px;
  background: ${p => p.$bg ?? (p.$child ? '#808080' : '#8d8d8d')};
  border-top: 1px solid #777;
`;
const ClipBox = styled.div<{ $c: string; $dark?: boolean }>`
  position: absolute;
  top: 0;
  z-index: 2;
  height: 43px;
  background: ${p => (p.$dark ? 'linear-gradient(#484845, #3d3d3d)' : p.$c)};
  border: 1px solid #000;
  box-shadow: ${p => (p.$dark ? 'inset 0 0 0 1px #6e716c' : 'none')};
  overflow: hidden;
`;
const ClipHead = styled.div<{ $sel?: boolean }>`
  position: relative;
  height: 20px;
  padding-left: 6px;
  line-height: 23px;
  white-space: nowrap;
  overflow: hidden;
  background: ${p => (p.$sel ? 'rgba(0,0,0,.42)' : 'linear-gradient(transparent, rgba(0,0,0,.07))')};
  color: ${p => (p.$sel ? '#fff' : 'rgba(0,0,0,.7)')};
  font-weight: ${p => (p.$sel ? 700 : 400)};
`;
const Strips = styled.div`
  position: absolute;
  inset: 3px 1px 1px;
`;

const notesPath = (len: number, notes: Note[], period: number) => {
  let d = '';
  for (let o = 0; o < len; o += period) {
    for (const [x, w, y] of notes) {
      if (o + x >= len || x >= period) continue;
      const ww = Math.min(w, len - o - x);
      d += `M${(o + x).toFixed(3)} ${y}h${ww.toFixed(3)}v2h-${ww.toFixed(3)}z`;
    }
  }
  return d;
};

/* A clip with no name is a pick-up: it carries only the last notes before the bar. */
const clipNotes = (c: Clip, t: Track): Note[] => {
  if (t.notes === N_SAX && !c.name) return [[.86, .07, 36]];
  if (t.notes === N_VOX) return [[(c.to - c.from) * .12, (c.to - c.from) * .74, 24]];
  if (t.name === 'Snare' && !c.name) return [[.02, .03, 24], [.09, .03, 24], [.15, .03, 24], [.2, .03, 24]];
  if (t.name === 'Shaker' && !c.name) return [[.02, .07, 24], [.25, .1, 24], [.5, .1, 24]];
  if (t.name === 'Brass Center' && c.to - c.from === 8) return N_CENTER_LONG;
  return t.notes!;
};

const NotesView = ({ clip, t }: { clip: Clip; t: Track }) => {
  const len = clip.to - clip.from;
  return (
    <FullSvg viewBox={`0 0 ${len} 41`} preserveAspectRatio="none" shapeRendering="crispEdges">
      <path d={notesPath(len, clipNotes(clip, t), t.period!)} fill="#000" opacity=".48" />
    </FullSvg>
  );
};

const LoopMarks = ({ len, loop }: { len: number; loop: number }) => {
  const n = Math.ceil(len / loop) - 1;
  return (
    <FullSvg>
      {Array.from({ length: n }, (_, i) => {
        const x = `${(((i + 1) * loop) / len) * 100}%`;
        return <line key={i} x1={x} x2={x} y1="2" y2="20" stroke="#fff" strokeOpacity={i ? .25 : .4} strokeDasharray={i ? '1 2' : '5 1'} shapeRendering="crispEdges" />;
      })}
    </FullSvg>
  );
};

const MUTED: Record<string, string> = { [GOLD]: '#a1864d', [VIOLET]: '#676aa1', [SEA]: '#1f749f', [SKY]: '#4592b3', [GREEN]: '#2c6b41' };

const GroupStrips = ({ clip, kids }: { clip: Clip; kids: Track[] }) => {
  const len = clip.to - clip.from;
  const pitch = kids.length === 5 ? 8 : 7;
  return (
    <Strips>
      <FullSvg viewBox={`0 0 ${len} 38`} preserveAspectRatio="none" shapeRendering="crispEdges">
        {kids === vocalKids
          ? <rect x={len * .1} y="20" width={len * .75} height="2" fill="#26713f" />
          : kids.map((k, row) => k.clips.map((c, i) => {
            const a = Math.max(c.from, clip.from);
            const b = Math.min(c.to, clip.to);
            return b > a ? <rect key={`${row}-${i}`} x={a - clip.from} y={row * pitch} width={b - a - (b < clip.to ? .03 : 0)} height={Math.min(pitch - 1, 38 - row * pitch)} fill={MUTED[k.color]} /> : null;
          }))}
      </FullSvg>
    </Strips>
  );
};

const LaneView = ({ t }: { t: Track }) => (
  <Lane $child={t.child}>
    {t.clips.map((c, i) => {
      const len = c.to - c.from;
      return (
        <ClipBox key={i} $c={t.color} $dark={c.dark} style={{ left: `${pct(c.from)}%`, width: `calc(${(len / BARS) * 100}% + 1px)` }}>
          {c.dark ? <GroupStrips clip={c} kids={t.kids!} /> : (
            <>
              <NotesView clip={c} t={t} />
              {t.loop && len > t.loop ? <LoopMarks len={len} loop={t.loop} /> : null}
              <ClipHead $sel={c.selected}>{c.name}</ClipHead>
            </>
          )}
        </ClipBox>
      );
    })}
  </Lane>
);

const barLines = (draw: (bar: number, major: boolean) => React.ReactNode) =>
  Array.from({ length: 233 }, (_, i) => {
    const bar = .5 + i * .25;
    return bar > FIRST_BAR && bar < 58.48 ? draw(bar, Number.isInteger(bar)) : null;
  });

const ScrollColumn = styled.div`
  grid-area: 1 / 3 / 3 / 4;
  display: flex;
  flex-direction: column;
  align-items: center;
  gap: 7px;
  padding: 7px 0 4px;
`;
const ThumbV = styled.div`
  flex: 0 1 856px;
  width: 9px;
  margin-bottom: auto;
  background: #757575;
  border-radius: 4px;
`;
const BottomBar = styled.div`
  grid-column: 1 / 4;
  display: flex;
  align-items: center;
  gap: 3px;
  padding: 0 23px 0 2px;
`;
const Toggle = styled.button<{ $plain?: boolean }>`
  width: 17px;
  height: 17px;
  background: ${p => (p.$plain ? 'none' : '#383838')};
  border-radius: 3px;
`;
const AutomationToggle = styled(Toggle)`
  width: 20px;
  margin-left: 6px;
`;
const ThumbH = styled.div`
  flex: 1;
  height: 9px;
  margin: 0 6px 0 3px;
  background: #787878;
  border-radius: 4px;
`;
const SnapLabel = styled.button`
  gap: 7px;
  margin: 0 4px 0 54px;
  color: #bdbdbd;
`;
const LeftTools = styled.div`
  display: flex;
  gap: 3px;
  width: 206px;
`;

const ArrangeView = () => (
  <Arranger>
    <ModeBar>
      <ModeButton aria-label="Track options"><svg width="12" height="11" fill="#fff"><path d="M0 0h2v1.5H0zM3 0h6v1.5H3zM2 3h2v1.5H2zM5 3h5v1.5H5zM2 6h2v1.5H2zM5 6h6v1.5H5zM4 9h7v1.5H4z" /></svg><Tri d="d" c="#fff" s={5} /></ModeButton>
      <ModeButton aria-label="Clip launcher"><svg width="12" height="9" fill="#fff"><path d="M0 0h3v3.5H0zM4.5 0h3v3.5h-3zM9 0h3v3.5H9zM0 5h3v3.5H0zM4.5 5h3v3.5h-3zM9 5h3v3.5H9z" /></svg></ModeButton>
      <ModeButton $on aria-label="Arranger timeline"><svg width="12" height="8" fill={ORANGE}><path d="M0 0h12v3H0zM0 5h12v3H0z" /></svg></ModeButton>
      <ModeButton as="span" />
      <ModeButton aria-label="Follow"><svg width="13" height="12" fill="#757575"><path d="M0 0h11v2.5H0zM0 4.5h11V7H0zM0 9h8v2.5H0zM9 7l4 3-4 3z" /></svg></ModeButton>
      <ModeButton aria-label="Pointer tool" $gap={7}><svg width="11" height="15" viewBox="0 0 11 15"><path d="M1 0v12.5l3-2.7 2 4.7 2.2-1-2-4.5H11z" fill="#fff" /></svg><Tri d="d" c="#8b8b8b" s={5} /></ModeButton>
    </ModeBar>
    <Ruler>
      <FullSvg shapeRendering="crispEdges">
        {barLines((b, major) => <line key={b} x1={`${pct(b)}%`} x2={`${pct(b)}%`} y1={major ? 10 : 22} y2="38" stroke={major ? '#808080' : '#505050'} />)}
      </FullSvg>
      {Array.from({ length: 58 }, (_, i) => <BarNumber key={i} style={{ left: `${pct(i + 1)}%` }}>{i + 1}</BarNumber>)}
      <CueMark style={{ left: `${pct(1.5)}%` }} />
      <Playhead style={{ left: `${pct(6)}%` }} />
    </Ruler>
    <ScrollColumn><Tri d="u" /><ThumbV /><Tri d="d" c="#b5b5b5" /></ScrollColumn>
    <TrackList>
      {TRACKS.map(t => t.kids ? (
        <Group key={t.name} $c={t.stripe}>
          <GroupBody>
            <Header t={t} />
            {t.kids.map((k, i) => <Header key={i} t={k} stripe={k.stripe} />)}
          </GroupBody>
        </Group>
      ) : <Header key={t.name} t={t} stripe={t.stripe} />)}
      <AddTrack aria-label="Add track"><PlusIcon /></AddTrack>
      <Header t={{ name: 'FX 1', level: 70, group: true }} stripe="#7d7d7d" />
    </TrackList>
    <Timeline>
      {TRACKS.flatMap(t => [t, ...(t.kids ?? [])]).map((t, i) => <LaneView key={i} t={t} />)}
      <Lane $h={23} $bg="#777" />
      <Lane />
      <GridSvg shapeRendering="crispEdges">
        {barLines((b, major) => <line key={b} x1={`${pct(b)}%`} x2={`${pct(b)}%`} y1="0" y2="100%" stroke="#000" strokeOpacity={major ? .38 : .1} />)}
      </GridSvg>
    </Timeline>
    <BottomBar>
      <LeftTools>
        <Toggle $plain aria-label="Swap"><svg width="11" height="10" fill="none" stroke="#c2c2c2" strokeWidth="1.4"><path d="M4 0L1 2.5 4 5M1 2.5h9M7 5l3 2.5L7 10M3 7.5h7" /></svg></Toggle>
        <Toggle aria-label="Track layout"><svg width="11" height="9" fill={ORANGE}><path d="M0 0h5v1.5H0zM0 2.5h5V4H0zM0 5h5v1.5H0zM0 7.5h5V9H0zM6 0h5v4H6zM6 5h5v4H6z" /></svg></Toggle>
        <Toggle aria-label="Nested"><CornerArrow c={ORANGE} /></Toggle>
        <Toggle aria-label="Close nested"><svg width="9" height="9" stroke={ORANGE} strokeWidth="2"><path d="M1 1l7 7M8 1L1 8" /></svg></Toggle>
      </LeftTools>
      <Tri d="l" />
      <ThumbH />
      <Tri d="r" />
      <AutomationToggle aria-label="Automation"><svg width="13" height="13" viewBox="0 0 13 13" fill="none" stroke={ORANGE} strokeWidth="1.2"><circle cx="2.5" cy="5" r="1.7" /><circle cx="10" cy="2" r="1.7" /><path d="M4 4.5L8.5 2.5M.6 8.5h5v3.5h-5zM7.4 8.5h5v3.5h-5zM4 10.2h5" /></svg></AutomationToggle>
      <SnapLabel>1/4<Tri d="u" c="#bdbdbd" s={5} /></SnapLabel>
      <Toggle aria-label="Snap"><svg width="12" height="10" fill={ORANGE}><path d="M5.5 0h1v10h-1zM0 2l4 3-4 3zM12 2L8 5l4 3z" /></svg></Toggle>
      <Toggle $plain aria-label="Grid"><svg width="10" height="11" fill="#b5b5b5"><path d="M0 2.5h6V1l4 2.5L6 6V4.5H0zM1 7h1v4H1zM4 7h1v4H4zM7 5h1v6H7z" /></svg></Toggle>
    </BottomBar>
  </Arranger>
);

/* ------------------------------------------------------------------ */
/* Knob                                                                */
/* ------------------------------------------------------------------ */

const KnobLabel = styled.label<{ $dim?: boolean }>`
  position: relative;
  display: flex;
  flex-direction: column;
  align-items: center;
  white-space: nowrap;
  color: ${p => (p.$dim ? '#8f8f8f' : '#c6c6c6')};
`;
const KnobInput = styled.input`
  position: absolute;
  inset: 0;
  width: 100%;
  height: 100%;
  opacity: 0;
`;
const KnobText = styled.span<{ $bright?: boolean }>`
  display: flex;
  align-items: center;
  gap: 5px;
  height: 13px;
  margin-top: -2px;
  ${p => p.$bright && 'color: #f2f2f2;'}
`;

const SWEEP = 138;
const polar = (c: number, r: number, v: number) => {
  const a = ((-SWEEP + 2 * SWEEP * v) * Math.PI) / 180;
  return [c + r * Math.sin(a), c - r * Math.cos(a)];
};
const arc = (c: number, r: number, a: number, b: number) => {
  const [x1, y1] = polar(c, r, a);
  const [x2, y2] = polar(c, r, b);
  return `M${x1.toFixed(2)} ${y1.toFixed(2)}A${r} ${r} 0 ${(b - a) * 2 * SWEEP > 180 ? 1 : 0} 1 ${x2.toFixed(2)} ${y2.toFixed(2)}`;
};

type KnobProps = {
  r?: number; v: number; color?: string; from?: number; mod?: [number, number]; modColor?: string;
  light?: boolean; dim?: boolean; bright?: boolean; name?: string; children?: React.ReactNode;
};
const Knob = ({ r = 18, v, color = ORANGE, from = 0, mod, modColor = CYAN, light, dim, bright, name, children }: KnobProps) => {
  const c = r + 1;
  const body = r < 15 ? r - 4 : r > 25 ? r - 6 : r - 5;
  const [px1, py1] = polar(c, body * .35, v);
  const [px2, py2] = polar(c, body * .92, v);
  const a = Math.min(from, v);
  const b = Math.max(from, v);
  return (
    <KnobLabel $dim={dim}>
      <svg width={c * 2} height={c * 2} fill="none">
        <path d={arc(c, r - 1, 0, 1)} stroke="#fff" strokeOpacity=".2" strokeWidth="2" />
        {b > a && <path d={arc(c, r - 1, a, b)} stroke={dim ? '#8a8a8a' : color} strokeWidth="2" />}
        {b === a && from > 0 && <path d={arc(c, r - 1, .49, .51)} stroke={color} strokeWidth="2" />}
        {mod && <path d={arc(c, r - 1, mod[0], mod[1])} stroke={modColor} strokeWidth="2" />}
        <circle cx={c} cy={c} r={body + 1} fill="#000" fillOpacity=".45" />
        <circle cx={c} cy={c} r={body} fill={light ? 'url(#knobLight)' : 'url(#knobDark)'} opacity={dim ? .8 : 1} />
        <path d={`M${px1} ${py1}L${px2} ${py2}`} stroke={light ? '#111' : dim ? '#bbb' : '#fff'} strokeWidth={body > 14 ? 2.5 : 2} />
      </svg>
      <KnobInput type="range" min="0" max="1" step="0.01" defaultValue={v} aria-label={name} />
      {children && <KnobText $bright={bright}>{children}</KnobText>}
    </KnobLabel>
  );
};

/* ------------------------------------------------------------------ */
/* Device chain                                                        */
/* ------------------------------------------------------------------ */

const DevicePanel = styled.section`
  flex: none;
  display: flex;
  height: 247px;
  background: #151515;
  border: 2px solid #777;
  border-radius: 4px;
  overflow: hidden;
`;
const Defs = styled.svg`
  position: absolute;
`;
const SideTab = styled.div<{ $c: string }>`
  display: grid;
  grid-template-rows: 30px 1fr 20px 20px;
  justify-items: center;
  align-items: center;
  width: 27px;
  margin-right: 2px;
  padding: 12px 0;
  background:
    linear-gradient(${p => p.$c}, ${p => p.$c}) 0 8px / 100% 4px no-repeat,
    linear-gradient(${p => p.$c}, ${p => p.$c}) 0 231px / 100% 4px no-repeat,
    #404040;
`;
const VText = styled.span`
  writing-mode: vertical-rl;
  transform: rotate(180deg);
  font-weight: 700;
  color: #fff;
  white-space: nowrap;
`;
const ChainRow = styled.div`
  display: flex;
  align-items: center;
  padding-left: 7px;
  height: 243px;
`;
const Nested = styled.div`
  position: relative;
  display: flex;
  align-items: center;
  height: 219px;
  margin-left: 7px;
  &::before {
    content: '';
    position: absolute;
    left: 0;
    right: 0;
    top: -8px;
    height: 8px;
    border: solid #436c81;
    border-width: 5px 9px 0;
  }
`;
const AddDevice = styled.button<{ $w?: number; $align?: string }>`
  justify-content: ${p => p.$align ?? 'center'};
  width: ${p => p.$w ?? 21}px;
  height: 24px;
`;
const Device = styled.article`
  display: flex;
  gap: 3px;
  height: 219px;
  padding: 3px 3px 3px 0;
  background: #535353;
  border-radius: 8px;
  overflow: hidden;
`;
const DeviceSide = styled.div<{ $sel?: boolean }>`
  display: grid;
  grid-template-rows: 20px 21px 1fr auto 19px 19px;
  justify-items: center;
  align-items: center;
  width: 27px;
  margin: -3px 0;
  padding: 3px 0 2px;
  background: ${p => (p.$sel ? '#676767' : '#424242')};
`;
const Box = styled.div<{ $bg?: string; $w?: number; $h?: number; $pad?: string; $grow?: boolean; $r?: number; $justify?: string; $stretch?: boolean }>`
  display: flex;
  flex-direction: column;
  align-items: ${p => (p.$stretch ? 'stretch' : 'center')};
  justify-content: ${p => p.$justify ?? 'flex-start'};
  ${p => p.$grow && 'flex: 1; min-height: 0;'}
  ${p => p.$w && `width: ${p.$w}px;`}
  ${p => p.$h && `height: ${p.$h}px; flex: none;`}
  padding: ${p => p.$pad ?? '0'};
  background: ${p => p.$bg ?? '#424242'};
  border-radius: ${p => p.$r ?? 4}px;
  overflow: hidden;
`;
const Col = styled.div<{ $w?: number; $gap?: number }>`
  display: flex;
  flex-direction: column;
  gap: ${p => p.$gap ?? 3}px;
  ${p => p.$w && `width: ${p.$w}px;`}
`;
const Bracket = styled.span<{ $c: string }>`
  display: block;
  align-self: stretch;
  height: 4px;
  border: solid ${p => p.$c};
  border-width: 2px 2px 0;
`;
const SlotButton = styled.button<{ $h?: number; $bg?: string; $dim?: boolean }>`
  flex: none;
  flex-direction: column;
  align-items: center;
  justify-content: flex-start;
  gap: ${p => ((p.$h ?? 33) > 30 ? 5 : 3)}px;
  height: ${p => p.$h ?? 33}px;
  padding: 3px;
  background: ${p => p.$bg ?? '#313131'};
  border-radius: 4px;
  color: ${p => (p.$dim ? '#a8a8a8' : '#fff')};
  font-size: ${p => (p.$dim ? 11 : 10)}px;
  font-weight: ${p => (p.$dim ? 400 : 700)};
`;
const Slot = ({ c, children, h, bg, dim }: { c: string; children: React.ReactNode; h?: number; bg?: string; dim?: boolean }) => (
  <SlotButton $h={h} $bg={bg} $dim={dim}><Bracket $c={c} />{children}</SlotButton>
);

type DeviceProps = { title: string; on?: string; sel?: boolean; children: React.ReactNode };
const DeviceFrame = ({ title, on = ORANGE, sel, children }: DeviceProps) => (
  <Device>
    <DeviceSide $sel={sel}>
      <IconButton aria-label={`${title} on/off`}><Power c={on} /></IconButton>
      <IconButton aria-label="Open preset"><Folder c="#a2a2a2" /></IconButton>
      <VText>{title}</VText>
      {sel ? <CornerArrow c="#a8a8a8" /> : <span />}
      <MiniKnob c={sel ? ORANGE : '#cfcfcf'} />
      <ModMini filled={sel} />
    </DeviceSide>
    {children}
  </Device>
);

/* --- drum machine --- */

const PresetLine = styled.button`
  gap: 6px;
  height: 20px;
  justify-content: flex-start;
  color: #b3b3b3;
`;
const RemoteGrid = styled.div`
  display: grid;
  grid-template-columns: repeat(4, 54px);
  justify-content: center;
  justify-items: center;
  align-items: start;
  width: 100%;
  & + & { margin-top: 8px; }
`;
const RemoteCell = styled.div<{ $below?: boolean }>`
  display: flex;
  flex-direction: ${p => (p.$below ? 'column-reverse' : 'column')};
  align-items: center;
  gap: ${p => (p.$below ? 5 : 4)}px;
`;
const Divider = styled.span`
  width: 4px;
  margin: -3px 0;
  background: #363636;
`;
const PadGrid = styled.div`
  display: grid;
  grid-template: repeat(4, 51px) / 64px 64px 65px 65px;
  gap: 3px;
`;
const Pad = styled.div`
  display: flex;
  flex-direction: column;
  padding: 3px 4px 0 5px;
  background: #313131;
  border-radius: 4px;
  color: #f4f4f4;
`;
const PadName = styled.span`
  margin-bottom: 1px;
  white-space: nowrap;
`;
const PadFx = styled.div`
  display: flex;
  gap: 2px;
  height: 8px;
  padding-left: 3px;
`;
const PadFxCell = styled.span`
  width: 10px;
  background: #444;
`;
const PadButtons = styled.div`
  display: flex;
  justify-content: space-between;
  padding: 5px 4px 0 3px;
`;
const PadButton = styled.button<{ $c?: string }>`
  color: ${p => p.$c ?? '#fff'};
`;
const PADS: [string, number][] = [
  ['Tambour...', 1], ['Shaker T...', 1], ['Cowbell ...', 1], ['Cowbell ...', 1],
  ['Tom1', 2], ['Tom2', 2], ['Tom3', 2], ['Tom4', 2],
  ['Ride', 2], ['Rimshot', 3], ['Rim', 3], ['Crash', 2],
  ['Kick', 3], ['Snare', 3], ['HH Closed', 2], ['HH Open', 2],
];
const OctaveSvg = () => (
  <svg width="27" height="213" viewBox="0 0 27 213">
    <circle cx="13" cy="12" r="5.5" fill="none" stroke="#a0a0a0" strokeWidth="1.5" />
    <path d="M10 12h1M15 12h1M11 9.5h1M14 9.5h1M12.5 9h1" stroke="#a0a0a0" strokeWidth="1.5" />
    {[[22, 3], [40, 4], [63, 4], [86, 4], [109, 4], [132, 4], [155, 4], [178, 4], [201, 1]].map(([y, n], g) => (
      <g key={g}>
        {g === 5 && <rect x="3.5" y={y - 1} width="20" height="20" fill="#e6e6e6" />}
        {Array.from({ length: n }, (_, r) => [0, 1, 2, 3].map(c => (
          <rect key={`${r}${c}`} x={4 + c * 5} y={y + r * 5} width="4" height="4" fill={g === 5 ? '#9c9c9c' : '#222'} />
        )))}
      </g>
    ))}
  </svg>
);
const GhostButton = styled.button`
  width: 31px;
  height: 18px;
  border: 1px solid #383838;
  border-radius: 4px;
  background: #474747;
  color: #777;
  font-size: 12px;
  font-weight: 700;
  & + & { margin-top: 6px; }
`;
const Fader = styled.span`
  width: 33px;
  height: 127px;
  margin-bottom: 5px;
  background: #313131;
  border-radius: 3px;
`;

const DrumMachine = () => (
  <DeviceFrame title="DRUM MACHINE" sel>
    <Col $w={221}>
      <Box $bg="#313131" $h={48} $pad="4px 7px" $stretch>
        <PresetLine><Folder c="#c4c4c4" />Acoustic Drums Kit 1 Clean</PresetLine>
        <PresetLine><svg width="15" height="10"><circle cx="6" cy="5" r="4.6" fill="#c4c4c4" /><path d="M6 0v5" stroke="#333" strokeWidth="1.4" /></svg>Perform <Tri d="d" s={4} c="#8a8a8a" /></PresetLine>
      </Box>
      <Box $grow $pad="8px 0 0">
        <RemoteGrid>
          <RemoteCell><ModArrow c="#fff" /><Knob r={22} v={1} bright>LoPass</Knob></RemoteCell>
          <RemoteCell><ModArrow /><Knob r={22} v={.015} bright>HiPass</Knob></RemoteCell>
          <RemoteCell><ModArrow /><Knob r={22} v={.5} from={.5} bright>ComAt</Knob></RemoteCell>
          <RemoteCell><ModArrow /><Knob r={22} v={0} bright>ComSust</Knob></RemoteCell>
        </RemoteGrid>
        <RemoteGrid>
          <RemoteCell $below><ModArrow /><Knob r={22} v={.06} bright>Distortion</Knob></RemoteCell>
          <RemoteCell $below><ModArrow /><Knob r={22} v={0} bright>Delay</Knob></RemoteCell>
          <RemoteCell $below><ModArrow c="#5fd9ff" /><Knob r={22} v={.19} bright>Room</Knob></RemoteCell>
          <RemoteCell $below><ModArrow c="#e6faff" /><Knob r={22} v={.9} bright>Output</Knob></RemoteCell>
        </RemoteGrid>
      </Box>
    </Col>
    <Divider />
    <Box $w={27} $r={0}><OctaveSvg /></Box>
    <PadGrid>
      {PADS.map(([name, n], i) => (
        <Pad key={i}>
          <PadName>{name}</PadName>
          <Bracket $c="#406a80" />
          <PadFx>{Array.from({ length: n }, (_, k) => <PadFxCell key={k} />)}</PadFx>
          <PadButtons>
            <PadButton aria-label={`Play ${name}`}><Tri d="r" c="#fff" /></PadButton>
            <PadButton $c="#a0a0a0">S</PadButton>
            <PadButton $c="#d8d8d8">M</PadButton>
          </PadButtons>
        </Pad>
      ))}
    </PadGrid>
    <Box $w={41} $r={0} $pad="4px 0 0">
      <Knob r={14} v={0} dim name="Pad volume" />
      <Fader />
      <GhostButton>S</GhostButton>
      <GhostButton>M</GhostButton>
    </Box>
    <Col $w={53} $gap={0}>
      <Slot c="#406a80" bg="linear-gradient(90deg, transparent 5px, #3a3a3a 5px 10px, transparent 10px 12px, #3a3a3a 12px 17px, transparent 17px 19px, #3a3a3a 19px 24px, transparent 24px 26px, #3a3a3a 26px 31px, transparent 31px 33px, #3a3a3a 33px 38px, transparent 38px 40px, #3a3a3a 40px 45px, transparent 45px), #222">FX</Slot>
      <Box $grow $r={0} $pad="0 0 6px" $justify="flex-end">
        <Knob r={18} v={0} mod={[0, .85]}>Output</Knob>
      </Box>
    </Col>
  </DeviceFrame>
);

/* --- graphs --- */

type GraphProps = { w: number; h: number; x100: number; dec: number; top: number; bottom: number; labels: [number, string][]; labelY: number; rows: [number, boolean][]; children?: React.ReactNode };
const Graph = ({ w, h, x100, dec, top, bottom, labels, labelY, rows, children }: GraphProps) => (
  <svg width={w} height={h} fontFamily="Lato, sans-serif" fontSize="11">
    <g shapeRendering="crispEdges">
      {[10, 100, 1000, 10000].flatMap(b => [1, 2, 3, 4, 5, 6, 7, 8, 9].map(m => b * m)).filter(f => f <= 20000).map(f => {
        const x = x100 + Math.log10(f / 100) * dec;
        const major = [100, 1000, 10000].includes(f);
        return x > 7 ? <line key={f} x1={x} x2={x} y1={top} y2={bottom} stroke={major ? '#555' : '#303030'} /> : null;
      })}
      {rows.map(([y, hi]) => <line key={y} x1="0" x2={w} y1={y} y2={y} stroke={hi ? '#4a4a4a' : '#303030'} />)}
    </g>
    {labels.map(([x, t]) => <text key={t} x={x} y={labelY} fill="#6d6d6d">{t}</text>)}
    {children}
  </svg>
);

const ReadoutGrid = styled.div`
  display: grid;
  grid-template-columns: auto 1fr auto auto;
  column-gap: 9px;
  row-gap: 7px;
  width: 100%;
  padding: 6px 9px 7px 8px;
`;
const Readout = styled.span<{ $c?: string; $i?: boolean; $span?: boolean; $end?: boolean }>`
  color: ${p => p.$c ?? '#b8b8b8'};
  font-style: ${p => (p.$i ? 'italic' : 'normal')};
  grid-column: ${p => (p.$span ? 'span 2' : 'auto')};
  text-align: ${p => (p.$end ? 'right' : 'left')};
  white-space: nowrap;
`;
const KnobRow = styled.div<{ $end?: boolean }>`
  display: flex;
  justify-content: ${p => (p.$end ? 'space-between' : 'space-around')};
  align-items: ${p => (p.$end ? 'flex-end' : 'flex-start')};
  width: 100%;
`;
const KnobColumn = styled.div<{ $pad?: string; $justify?: string }>`
  flex: 1;
  display: flex;
  flex-direction: column;
  align-items: center;
  justify-content: ${p => p.$justify ?? 'space-between'};
  padding: ${p => p.$pad ?? '0 0 6px'};
`;
const Badge = styled.span`
  width: 11px;
  height: 11px;
  border-radius: 3px;
  background: #8d8d8d;
  color: #333;
  font-size: 9px;
  font-weight: 700;
  line-height: 11px;
  text-align: center;
`;
const YELLOW = '#ffde55';
const RED = '#f72945';
const LBLUE = '#4f9cea';

const Transients = () => (
  <DeviceFrame title="Transients">
    <Col $w={73}>
      <Slot c="#37774a" bg="linear-gradient(90deg, transparent 7px, #444 7px 20px, transparent 20px 22px, #444 22px 35px, transparent 35px), #313131">CHAIN</Slot>
      <Box $bg="#313131" $grow>
        <KnobColumn $pad="51px 0 6px">
          <Knob v={.5} from={.5}>Wet Gain<Badge>L</Badge></Knob>
          <Knob v={1}>Mix</Knob>
        </KnobColumn>
      </Box>
    </Col>
  </DeviceFrame>
);

const Distortion = () => (
  <DeviceFrame title="DISTORTION" on={CYAN}>
    <Box $bg="#222" $w={213}>
      <Graph w={213} h={101} x100={51} dec={54} top={4} bottom={101} labelY={20}
        labels={[[17, '20'], [55, '100'], [109, '1k'], [163, '10k']]}
        rows={[[24, false], [40, false], [72, false], [88, false]]}>
        {[['+20', 30], ['+10', 46], ['-10', 78], ['-20', 94]].map(([t, y]) => <text key={t} x="206" y={y as number} fill="#6d6d6d" textAnchor="end">{t}</text>)}
        <path d="M0 57H50Q64 55.5 72 54Q84 56 100 57H213" fill="none" stroke="#cbd06a" strokeWidth="1.6" />
        <path d="M9.5 4V101" stroke={RED} strokeWidth="1.4" />
        <path d="M177.5 4V101" stroke={LBLUE} strokeWidth="1.4" />
        <circle cx="9.5" cy="57" r="6" fill={RED} /><circle cx="72" cy="54" r="6" fill={YELLOW} /><circle cx="177.5" cy="57" r="6" fill="#59a4ef" />
        <path d="M8 60v-3h4M175 57h4v3" fill="none" stroke="#222" strokeOpacity=".6" />
      </Graph>
      <ReadoutGrid>
        <Readout $i>Pre EQ</Readout><Readout $c={YELLOW} $end>245 Hz</Readout><Readout $i $span $end>Post Distortion Cuts</Readout>
        <Readout $c={YELLOW}>Q 0.71</Readout><Readout $c={YELLOW} $end>+1.6 dB</Readout><Readout $c={RED} $end>16.4 Hz</Readout><Readout $c={LBLUE} $end>21.1 kHz</Readout>
      </ReadoutGrid>
      <Box $w={205} $h={61} $pad="7px 6px 0">
        <KnobRow>
          <Knob light v={.2}>Drive</Knob>
          <Knob light v={.5} from={.5}>Symm.</Knob>
          <Knob light v={0}>DC</Knob>
          <Knob light v={.9}>Slew</Knob>
        </KnobRow>
      </Box>
    </Box>
    <Col $w={53}>
      <Slot c="#37774a" h={29}>Wet FX</Slot>
      <Box $grow>
        <KnobColumn $pad="7px 0 6px">
          <Knob v={.66}>Width</Knob>
          <Knob v={.5} from={.5}>Wet Gain</Knob>
          <Knob v={0} mod={[0, .01]}>Mix</Knob>
        </KnobColumn>
      </Box>
    </Col>
  </DeviceFrame>
);

const FilterTabs = styled.div`
  display: grid;
  grid-template-columns: repeat(8, 20px);
  justify-content: center;
  width: 100%;
`;
const FilterTab = styled.button<{ $on?: boolean }>`
  height: 17px;
  color: ${p => (p.$on ? ORANGE : '#b8b8b8')};
  border-bottom: 2px solid ${p => (p.$on ? ORANGE : 'transparent')};
`;
const FILTERS = [
  'M0 2h4q3 0 4 6h2', 'M0 2h5v6M7 0v3h3M10 0v6', 'M1 8Q4 8 5 0Q6 8 9 8', 'M0 8h2L4 1v7M6 0l1 8M8 0v3h2M10 0v6',
  'M1 9Q3 2 5 2h6', 'M1 0v3h2M3 0v5M5 8V2h5', 'M0 2h2q2 0 3 6q1-6 3-6h2', 'M0 4h11',
];
const SmallKnobLine = styled.div`
  display: flex;
  justify-content: flex-end;
  align-items: center;
  gap: 5px;
  height: 32px;
  color: #c6c6c6;
`;
const FilterBody = styled.div`
  display: grid;
  grid-template-columns: 52px 52px 1fr;
  justify-items: center;
  width: 100%;
  padding: 6px 4px 0 4px;
`;
const WidthGlyph = () => <svg width="16" height="10" viewBox="0 0 16 10"><rect width="16" height="10" rx="4" fill="#c6c6c6" /><path d="M3 5h10M5.5 2.5L3 5l2.5 2.5M10.5 2.5L13 5l-2.5 2.5" stroke="#333" strokeWidth="1.3" fill="none" /></svg>;
const PeakGlyph = () => <svg width="12" height="10" viewBox="0 0 12 10"><path d="M0 10Q5 8 5 0h2q0 8 5 10L8 8.5 6 6 4 8.5z" fill="#c6c6c6" /></svg>;

const FilterDevice = ({ title, on, active, children, knobs }: { title: string; on: string; active: number; children: React.ReactNode; knobs: React.ReactNode }) => (
  <DeviceFrame title={title} on={on}>
    <Box $bg="#222" $w={181}>
      <Graph w={181} h={116} x100={44} dec={55} top={0} bottom={113} labelY={15}
        labels={[[10, '20'], [48, '100'], [103, '1k'], [158, '10k']]}
        rows={[[8, true], [32, false], [56, false], [80, false], [104, true]]}>{children}</Graph>
      <Box $w={173} $h={93} $pad="7px 0 0">
        <FilterTabs>
          {FILTERS.map((d, i) => (
            <FilterTab key={i} $on={i === active} aria-label={`Filter mode ${i + 1}`}>
              <svg width="11" height="10" fill="none" stroke="currentColor" strokeWidth="1.2"><path d={d} /></svg>
            </FilterTab>
          ))}
        </FilterTabs>
        <FilterBody>
          {knobs}
          <Col $gap={0}>
            <SmallKnobLine>Pre<Knob r={13} v={.5} from={.5} name="Pre" /></SmallKnobLine>
            <SmallKnobLine>Post<Knob r={13} v={.5} from={.5} name="Post" /></SmallKnobLine>
          </Col>
        </FilterBody>
      </Box>
    </Box>
  </DeviceFrame>
);

/* --- 1 16th delay --- */

const DelayTitle = styled.div`
  display: grid;
  grid-template-columns: 1fr 9px;
  grid-template-rows: 16px 30px;
  column-gap: 3px;
  justify-items: center;
  align-items: center;
  width: 100%;
  color: #a8a8a8;
`;
const DelayMeter = styled.span`
  grid-area: 1 / 2 / 3 / 3;
  width: 9px;
  height: 45px;
  background: #3a3a3a;
`;
const SourceLine = styled.label`
  display: flex;
  align-items: center;
  gap: 3px;
  color: #a8a8a8;
`;
const SourceSelect = styled.select`
  width: 57px;
  height: 21px;
  padding-left: 6px;
  appearance: none;
  background: linear-gradient(#999, #999) right 6px center / 5px 2px no-repeat, #535353;
  border-radius: 4px;
  color: #bdbdbd;
`;
const TimeLine = styled.div`
  display: grid;
  grid-template-columns: 15px 1fr;
  gap: 4px;
  width: 100%;
  margin: 2px 0 4px;
`;
const NoteButton = styled.button`
  height: 17px;
  background: #777;
  border: 1px solid #3a3a3a;
  border-radius: 3px;
`;
const TimeInput = styled.input`
  min-width: 0;
  height: 17px;
  padding-right: 5px;
  background: #3a3a3a;
  border-radius: 3px;
  text-align: right;
  color: #6e6e6e;
`;
const StepGrid = styled.div`
  display: grid;
  grid-template: repeat(4, 16px) / repeat(4, 1fr);
  width: 100%;
  border-radius: 4px;
  overflow: hidden;
`;
const Step = styled.button<{ $on?: boolean }>`
  background: ${p => (p.$on ? '#727272' : 'linear-gradient(#656565, #505050)')};
  border: solid #3f3f3f;
  border-width: 0 1px 2px 0;
  color: ${p => (p.$on ? '#4a4a4a' : '#b0b0b0')};
`;
const Offset = styled.div`
  width: 100%;
  height: 17px;
  margin: 3px 0 7px;
  border-radius: 3px;
  background: linear-gradient(#777, #777) center / 1px 13px no-repeat, #313131;
`;
const DelaySide = ({ side }: { side: 'Left' | 'Right' }) => (
  <Box $w={117} $pad="3px 4px 0 5px" $bg="#484848">
    <DelayTitle>
      <span>{side.toUpperCase()}</span>
      <SourceLine>Source<SourceSelect defaultValue={side}><option value={side}>{side} In</option></SourceSelect></SourceLine>
      <DelayMeter />
    </DelayTitle>
    <TimeLine>
      <NoteButton aria-label="Beat sync"><svg width="7" height="11" viewBox="0 0 7 11"><ellipse cx="2.5" cy="9" rx="2.3" ry="1.8" fill="#222" /><path d="M4.4 9V.5l2.3 3v2M4.4 3l2.3 2" stroke="#222" fill="none" /></svg></NoteButton>
      <TimeInput defaultValue="1.00 s" aria-label={`${side} time`} />
    </TimeLine>
    <StepGrid>{Array.from({ length: 16 }, (_, i) => <Step key={i} $on={i === 0}>{i + 1}</Step>)}</StepGrid>
    <Offset />
    <KnobRow $end>
      <Knob dim r={14} v={0}>Crossfeed</Knob>
      <Knob dim v={0}>Feedback</Knob>
    </KnobRow>
  </Box>
);
const Delay16 = () => (
  <DeviceFrame title="1 16th" on="#9a9a9a">
    <DelaySide side="Left" />
    <DelaySide side="Right" />
    <Col $w={53}>
      <Box $grow $bg="#484848"><KnobColumn $pad="3px 0 2px"><Knob dim v={0}>Detune</Knob><Knob dim v={.85} from={.85}>Rate</Knob></KnobColumn></Box>
      <Box $grow $bg="#484848">
        <KnobColumn $pad="3px 0 3px">
          <Knob dim v={.5}><svg width="10" height="8" fill="none" stroke="#aaa" strokeWidth="1.2"><path d="M0 1h4q5 0 5 6" /></svg></Knob>
          <Knob dim v={.9} from={.72}><svg width="10" height="8" fill="none" stroke="#aaa" strokeWidth="1.2"><path d="M1 8q0-7 5-7h4" /></svg></Knob>
        </KnobColumn>
      </Box>
    </Col>
    <Col $w={53}>
      <Slot c="#8f8f8f" bg="#3d3d3d" dim>FB FX</Slot>
      <Box $grow $bg="#484848"><KnobColumn $pad="51px 0 2px"><Knob dim v={.66}>Width</Knob><Knob dim r={22} v={0}>Mix</Knob></KnobColumn></Box>
    </Col>
  </DeviceFrame>
);

/* --- hall one --- */

const ModeToggle = styled.div`
  display: grid;
  grid-template-rows: 17px 17px;
  width: 53px;
  margin: 4px 0 6px;
  border: 1px solid #2e2e2e;
  border-radius: 4px;
  overflow: hidden;
`;
const ModeOption = styled.button<{ $on?: boolean }>`
  background: ${p => (p.$on ? ORANGE : 'linear-gradient(#6e6e6e, #4f4f4f)')};
  color: ${p => (p.$on ? '#5a3414' : '#fff')};
  font-weight: ${p => (p.$on ? 400 : 700)};
`;
const Field = styled.label`
  display: flex;
  flex-direction: column;
  gap: 2px;
  width: 53px;
  margin-bottom: 9px;
  white-space: nowrap;
  color: #c6c6c6;
`;
const FieldInput = styled.input`
  width: 53px;
  height: 20px;
  padding-right: 5px;
  background: #d0d0d0;
  border: 1px solid #2e2e2e;
  border-radius: 4px;
  color: #484848;
  text-align: right;
`;
const HallKnobs = styled.div`
  display: grid;
  grid-template-columns: 70px 41px 86px 41px 71px;
  justify-items: center;
  align-items: end;
  width: 100%;
  margin-top: -4px;
`;
const TopNote = styled.div<{ $c: string }>`
  display: flex;
  flex-direction: column;
  align-items: center;
  gap: 4px;
  color: ${p => p.$c};
  white-space: nowrap;
`;

const HallOne = () => (
  <DeviceFrame title="Hall One" on={CYAN}>
    <Box $w={61} $pad="3px 0 6px">
      <Readout $c="#ff7a3c">Early</Readout>
      <ModeToggle><ModeOption>Room</ModeOption><ModeOption $on>Hall</ModeOption></ModeToggle>
      <Field>Size<FieldInput defaultValue="64.7 %" /></Field>
      <Field>Pre-delay<FieldInput defaultValue="1.00 ms" /></Field>
      <KnobColumn $justify="flex-end" $pad="0"><Knob r={22} v={1}>Diffusion</Knob></KnobColumn>
    </Box>
    <Box $bg="#222" $w={309} $r={8} $pad="3px 0 6px" $justify="space-between">
      <Readout $c={YELLOW}>Late</Readout>
      <Graph w={309} h={112} x100={33} dec={117} top={3} bottom={112} labelY={19}
        labels={[[11, '60'], [37, '100'], [154, '1k'], [272, '10k']]}
        rows={[[58, true], [67, false], [77, false], [88, false], [101, false]]}>
        <path d="M89.5 3V112" stroke={RED} strokeWidth="1.5" /><path d="M225.5 3V112" stroke={LBLUE} strokeWidth="1.5" />
        <circle cx="89.5" cy="79" r="6" fill={RED} /><circle cx="225.5" cy="61" r="6" fill="#59a4ef" />
        <text x="89.5" y="82" fontSize="9" textAnchor="middle" fill="#4b1018">L</text><text x="225.5" y="64" fontSize="9" textAnchor="middle" fill="#163a5e">H</text>
      </Graph>
      <HallKnobs>
        <Knob light r={22} v={1} color={YELLOW}>Buildup</Knob>
        <TopNote $c={RED}>302 Hz<Knob light r={22} v={.28} from={.5} color={RED}>0.78x</Knob></TopNote>
        <Knob light r={30} v={.09} color={YELLOW} mod={[.11, .19]}>479 ms</Knob>
        <TopNote $c={LBLUE}>4.38 kHz<Knob light r={22} v={.48} from={.5} color={LBLUE}>0.97x</Knob></TopNote>
        <Knob light r={22} v={.63} color={YELLOW}>Late Mix</Knob>
      </HallKnobs>
    </Box>
    <Col $w={61}>
      <Slot c={YELLOW}>Tank FX</Slot>
      <Slot c="#37774a">Wet FX</Slot>
      <Box $grow><KnobColumn $pad="11px 0 6px"><Knob r={22} v={.85}>Width</Knob><Knob r={22} v={.02} mod={[0, .08]}>Mix</Knob></KnobColumn></Box>
    </Col>
  </DeviceFrame>
);

const NEST = '#31505f';

const DeviceChain = () => (
  <DevicePanel>
    <Defs width="0" height="0">
      <defs>
        <linearGradient id="knobDark" x1="0" y1="0" x2="0" y2="1"><stop offset="0" stopColor="#828282" /><stop offset="1" stopColor="#4e4e4e" /></linearGradient>
        <linearGradient id="knobLight" x1="0" y1="0" x2="0" y2="1"><stop offset="0" stopColor="#fafafa" /><stop offset="1" stopColor="#bdbdbd" /></linearGradient>
      </defs>
    </Defs>
    <SideTab $c="#7a7a7a"><svg width="13" height="11" viewBox="0 0 13 11" fill="#a9a9a9"><path d="M0 2l3.5 3L6.5 0l3 5L13 2l-1.5 6h-10zM1.5 9h10v1.5h-10z" /></svg><VText>PROJECT</VText><MiniKnob /><ModMini /></SideTab>
    <SideTab $c="#5661c0"><Folder /><VText>DRUMS</VText><MiniKnob /><ModMini /></SideTab>
    <SideTab $c="#5661c0"><Piano c="#a9a9a9" /><VText>BASS DRUM</VText><MiniKnob /><ModMini /></SideTab>
    <ChainRow>
      <AddDevice aria-label="Add device" $w={15} $align="flex-start"><PlusIcon /></AddDevice>
      <DrumMachine />
      <Nested>
        <AddDevice aria-label="Add device" $w={14} $align="flex-start"><PlusIcon c={NEST} /></AddDevice>
        <Transients />
        <AddDevice aria-label="Add device"><PlusIcon c={NEST} /></AddDevice>
        <Distortion />
        <AddDevice aria-label="Add device"><PlusIcon c={NEST} /></AddDevice>
        <FilterDevice title="Lo-Pass" on={ORANGE} active={0} knobs={<>
          <Knob light r={22} v={.47} mod={[.47, 1]}><WidthGlyph /></Knob>
          <Knob light r={22} v={.46} color="#4f7c8c"><PeakGlyph /></Knob>
        </>}>
          <circle cx="84" cy="61" r="6" fill="#ff7f2e" /><circle cx="170" cy="104" r="3" fill="#3ac9ef" />
        </FilterDevice>
        <AddDevice aria-label="Add device"><PlusIcon c={NEST} /></AddDevice>
        <FilterDevice title="Hi-Pass" on={CYAN} active={4} knobs={<>
          <Knob light r={22} v={.02} color="#3b8f8c"><WidthGlyph /></Knob>
          <Knob light r={22} v={.01} color="#3b8f8c"><PeakGlyph /></Knob>
        </>}>
          <circle cx="11" cy="104" r="6" fill="#ff7f2e" />
        </FilterDevice>
        <AddDevice aria-label="Add device"><PlusIcon c={NEST} /></AddDevice>
        <Delay16 />
        <AddDevice aria-label="Add device"><PlusIcon c={NEST} /></AddDevice>
        <HallOne />
        <AddDevice aria-label="Add device" $w={14} $align="flex-end"><PlusIcon c={NEST} /></AddDevice>
      </Nested>
      <AddDevice aria-label="Add device" $w={34}><PlusIcon c="#999" /></AddDevice>
    </ChainRow>
  </DevicePanel>
);

/* ------------------------------------------------------------------ */
/* Browser                                                             */
/* ------------------------------------------------------------------ */

const Browser = styled.aside`
  display: flex;
  flex-direction: column;
  min-height: 0;
  border: 2px solid ${FRAME};
  border-radius: 3px;
  overflow: hidden;
`;
const BrowserTabs = styled.div`
  display: flex;
  align-items: center;
  gap: 5px;
  height: 41px;
  padding: 0 0 2px 9px;
  border-bottom: 1px solid #5c5c5c;
`;
const BrowserTab = styled.button<{ $on?: boolean }>`
  width: ${p => (p.$on ? 22 : 19)}px;
  height: 22px;
  &:first-child { margin-right: 5px; }
  ${p => p.$on && css`
    background: #111;
    border: 2px solid #d8d8d8;
    border-radius: 4px;
  `}
`;
const BrowserTitle = styled.div`
  display: grid;
  grid-template-columns: 1fr auto 1fr;
  align-items: center;
  height: 31px;
  color: #c6c6c6;
  svg { justify-self: end; grid-column: 3; margin-right: 12px; }
  span { grid-column: 2; }
`;
const SearchBox = styled.label`
  display: grid;
  grid-template-columns: 16px 1fr 9px;
  align-items: center;
  height: 21px;
  margin: 0 6px 0 7px;
  padding: 0 9px 0 6px;
  background: #151515;
  border-radius: 4px;
`;
const SearchInput = styled.input`
  min-width: 0;
`;
const Filters = styled.div`
  display: grid;
  grid-template: repeat(3, 25px) / 1fr 1fr;
  padding: 1px 0 3px 13px;
`;
const FilterButton = styled.button`
  justify-content: flex-start;
  gap: 10px;
  color: #c0c0c0;
`;
const List = styled.ul`
  flex: 1;
  min-height: 0;
  padding-top: 3px;
  overflow: hidden;
  background: linear-gradient(#454545, #454545) right top / 4px 17px no-repeat, #151515;
`;
const Item = styled.li`
  display: grid;
  grid-template-columns: 17px 1fr 6px;
  align-items: center;
  column-gap: 8px;
  height: 23px;
  padding: 0 16px 0 9px;
  color: #f4f4f4;
`;

const ITEM_NAMES = 'Amp,Arpeggiator,Audio Receiver,Bend,Bit-8,Blur,Chain,Channel Filter,Channel Map,Chorus+,Chorus,Comb,Compressor+,Compressor,Convolution,DC Offset,De-Esser,Delay+,Delay-1,Delay-2,Delay-4,Distortion,Dribble,Drum Machine,Dual Pan,Dynamics,E-Clap,E-Cowbell,E-Hat,E-Kick,E-Snare,E-Tom,Echo,EQ+,EQ-2,EQ-5,EQ-DJ,Filter+,Filter,Flanger+,Flanger,FM-4,Focus,Freq Shifter,Freq Split,FX Grid,FX Layer,FX Selector'.split(',');
const NOTE_FX = ['Arpeggiator', 'Bend', 'Channel Filter', 'Channel Map', 'Dribble', 'Echo'];
const CONTAINERS = ['Chain', 'FX Layer', 'FX Selector'];
const FLAT = ['Audio Receiver', 'Channel Map', 'Dual Pan'];

const ItemIcon = ({ name }: { name: string }) => {
  if (NOTE_FX.includes(name)) return (
    <svg width="17" height="17"><rect width="17" height="17" rx="2" fill="#2fa5d5" /><rect width="17" height="9" rx="2" fill="#5cc3ea" /><path d="M3 5h5M3 11h5M10 8h4" stroke="#0d3242" strokeWidth="1.3" /></svg>
  );
  if (CONTAINERS.includes(name)) return (
    <svg width="17" height="17"><rect width="17" height="17" rx="2" fill="#e55a3c" /><path d="M4 5h4v2h5v6H4z" fill="#111" /><path d="M4 7.5h3l2-1.5" stroke="#e55a3c" fill="none" /></svg>
  );
  if (name === 'Freq Split') return (
    <svg width="17" height="17"><rect width="17" height="17" rx="2" fill="#e55a3c" /><path d="M3.5 4v10M6 6v8M8.5 7v7M11 8v6M13.5 9v5" stroke="#111" strokeWidth="1.4" /></svg>
  );
  if (name === 'Drum Machine') return (
    <svg width="17" height="17"><rect width="17" height="17" rx="2" fill="#b88b2c" /><path d="M3 3h11v11H3z" fill="#5c4616" /><path d="M3 6.5h11M3 10.5h11M6.5 3v11M10.5 3v11" stroke="#b88b2c" /></svg>
  );
  if (/^(E-|FM)/.test(name)) return (
    <svg width="17" height="17"><rect width="17" height="17" rx="2" fill="#e3b63f" /><rect x="2.5" y="2.5" width="12" height="12" fill="#ffd96a" stroke="#4a3a0e" /><path d="M5 3h2v6H5zM10 3h2v6h-2zM7.7 3h1.6v6H7.7z" fill="#2b2208" /><path d="M6.5 9v5M10.5 9v5" stroke="#4a3a0e" strokeWidth=".8" /></svg>
  );
  return (
    <svg width="17" height="17"><rect width="17" height="17" rx="2" fill="#d9502f" /><rect width="17" height="9" rx="2" fill="#f06a4a" /><path d="M4.5 1.5h8v14h-8z" fill="#f08a6c" stroke="#5a2014" /><path d="M6 3h2v2H6zM9 3h2v2H9z" fill="#7a2c1a" /><path d="M5 10.5h7V15H5z" fill="#3c201a" /><path d="M3 6.5h1.5v2H3zM12.5 6.5H14v2h-1.5z" fill="#3c1a10" /></svg>
  );
};

const BrowserPanel = () => (
  <Browser>
    <BrowserTabs>
      <BrowserTab aria-label="Overview"><svg width="17" height="18" fill="none" stroke="#9a9a9a" strokeWidth="1.2"><path d="M1 1h6v6H1zM11 1h5.5v6H11zM1 11h6v6H1zM11 11h5.5v6H11z" /></svg></BrowserTab>
      <BrowserTab $on aria-label="Everything"><Aster c="#fff" s={12} /></BrowserTab>
      <BrowserTab aria-label="Devices"><svg width="18" height="19"><path d="M1 1h16v17H1z" fill="#222" stroke="#777" /><path d="M1 1h4v17H1z" fill="#666" /></svg></BrowserTab>
      <BrowserTab aria-label="Presets"><svg width="19" height="19"><path d="M1 1h16v17H1z" fill="#222" stroke="#777" /><path d="M7 6h7v3H7zM4 9h5v2H4z" fill="#666" /><circle cx="14" cy="14" r="4.5" fill="#777" /><path d="M12.8 17v-5h1.7a1.3 1.3 0 0 1 0 2.8h-1.7" stroke="#222" fill="none" /></svg></BrowserTab>
      <BrowserTab aria-label="Samples"><svg width="18" height="19"><path d="M1 1h16v17H1z" fill="#2a1e2c" stroke="#7b4f86" /><path d="M1 1h16v4H1z" fill="#7b4f86" /><path d="M3 11l2-3 1 7 2-5 1 3 2-4 1 5 2-2h2" fill="none" stroke="#a868b8" /></svg></BrowserTab>
      <BrowserTab aria-label="My library"><svg width="18" height="18"><rect width="18" height="18" rx="1" fill="#a1812f" /><circle cx="9" cy="7" r="3" fill="#4d3c16" /><path d="M3.5 15q0-4.5 5.5-4.5t5.5 4.5z" fill="#4d3c16" /></svg></BrowserTab>
      <BrowserTab aria-label="Computer"><svg width="19" height="19"><path d="M1 1h17v13H1z" fill="#3f8095" stroke="#7a7a7a" strokeWidth="1.5" /><path d="M7 15h5v2h2v1.5H5V17h2z" fill="#7a7a7a" /></svg></BrowserTab>
    </BrowserTabs>
    <BrowserTitle>
      <span>Everything</span>
      <svg width="15" height="15" viewBox="0 0 15 15" fill="none" stroke="#8f7b35" strokeWidth="1.2"><path d="M7.5 1l1.9 4.5 4.8.4-3.6 3.2 1 4.8-4.1-2.5-4.1 2.5 1-4.8L.8 5.9l4.8-.4z" /></svg>
    </BrowserTitle>
    <SearchBox>
      <svg width="15" height="11" fill="none" stroke="#cfcfcf" strokeWidth="1.3"><circle cx="4.5" cy="4.5" r="3.5" /><path d="M7 7l3 3" /><path d="M9.5 5.5h5L12 8z" fill="#cfcfcf" stroke="none" /></svg>
      <SearchInput type="text" aria-label="Search" />
      <Cross s={8} c="#b5b5b5" />
    </SearchBox>
    <Filters>
      {['Location', 'File Kind', 'Category', 'Creator', 'Device', 'Tags'].map(f => <FilterButton key={f}><Aster s={9} />{f}</FilterButton>)}
    </Filters>
    <List>
      {ITEM_NAMES.map(n => (
        <Item key={n}>
          <ItemIcon name={n} />
          <span>{n}</span>
          {FLAT.includes(n) ? null : <svg width="6" height="8" fill="none" stroke="#8a8a8a" strokeWidth="1.2"><path d="M.5.5L5 4 .5 7.5" /></svg>}
        </Item>
      ))}
    </List>
  </Browser>
);

/* ------------------------------------------------------------------ */
/* Footer                                                              */
/* ------------------------------------------------------------------ */

const Footer = styled.footer`
  flex: none;
  display: flex;
  align-items: center;
  height: 37px;
  padding: 0 16px 0 16px;
`;
const Sep = styled.span`
  width: 2px;
  height: 20px;
  background: #8a8a8a;
`;
const InspectorToggle = styled.button`
  width: 15px;
  height: 18px;
  margin-right: 12px;
`;
const ViewTabs = styled.nav`
  display: flex;
  gap: 15px;
  margin: 0 16px 0 15px;
`;
const ViewTab = styled.button<{ $on?: boolean }>`
  color: ${p => (p.$on ? ORANGE : '#c4c4c4')};
  font-weight: 700;
`;
const FooterIcons = styled.div<{ $end?: boolean }>`
  display: flex;
  align-items: center;
  gap: 16px;
  margin-left: ${p => (p.$end ? 'auto' : '13px')};
  ${Sep} { margin: 0 -3px; }
`;
const FooterButton = styled.button`
  width: 15px;
  height: 18px;
`;

const FooterBar = () => (
  <Footer>
    <InspectorToggle aria-label="Inspector"><svg width="5" height="12" fill={ORANGE}><path d="M1 0h3v2H1zM0 4h4v2H0zM1 7h3v2H1zM0 10h5v2H0z" /></svg></InspectorToggle>
    <Sep />
    <ViewTabs><ViewTab $on>ARRANGE</ViewTab><ViewTab>MIX</ViewTab><ViewTab>EDIT</ViewTab></ViewTabs>
    <Sep />
    <FooterIcons>
      <FooterButton aria-label="Note editor"><svg width="12" height="12" fill="#c4c4c4"><path d="M0 0h4v2H0zM4 3h3v2H4zM8 5h4v2H8zM1 6h3v2H1zM8 9h4v2H8zM0 10h4v2H0z" /></svg></FooterButton>
      <FooterButton aria-label="Automation editor"><svg width="14" height="13" fill="none" stroke="#c4c4c4" strokeWidth="1.3"><circle cx="3" cy="10" r="2.2" /><circle cx="11" cy="3" r="2.2" /><path d="M4.5 8.5L6 7h2l1.5-2" /></svg></FooterButton>
      <FooterButton aria-label="Device panel"><svg width="15" height="15"><rect x=".8" y=".8" width="13.4" height="13.4" rx="1.5" fill="#6c4424" stroke={ORANGE} strokeWidth="1.5" /><path d="M1 1h3v13H1z" fill={ORANGE} /></svg></FooterButton>
      <FooterButton aria-label="Mixer panel"><svg width="15" height="14" fill="none" stroke="#c4c4c4" strokeWidth="1.3"><path d="M2.5 0v14M7.5 0v14M12.5 0v14" /><path d="M1 5h3v3H1zM6 9h3v3H6zM11 2h3v3h-3z" fill="#313131" /></svg></FooterButton>
    </FooterIcons>
    <FooterIcons $end>
      <FooterButton aria-label="Browser"><svg width="14" height="14" fill="none" stroke={ORANGE} strokeWidth="1.7"><circle cx="6" cy="6" r="4.6" /><path d="M9.5 9.5l4 4" /></svg></FooterButton>
      <FooterButton aria-label="Project"><svg width="12" height="13" fill="#c4c4c4"><path d="M0 0h7l5 4v9H0z" /><path d="M7 0v4h5" stroke="#777" fill="none" /></svg></FooterButton>
      <FooterButton aria-label="Studio I/O"><svg width="14" height="16"><rect width="14" height="16" rx="3" fill="#c4c4c4" /><circle cx="7" cy="3.5" r="1.5" fill="#333" /><circle cx="7" cy="10" r="4.2" fill="#333" /><circle cx="7" cy="10" r="2" fill="#c4c4c4" /></svg></FooterButton>
      <FooterButton aria-label="Mappings"><svg width="13" height="14" fill="#c4c4c4"><path d="M3 0h2v5l7 1.5Q14 9 12 13H5L0 7.5 1 6l2 2z" /></svg></FooterButton>
      <Sep />
      <FooterButton aria-label="On-screen keyboard"><Piano c="#d0d0d0" /></FooterButton>
    </FooterIcons>
  </Footer>
);

export default function App() {
  return (
    <Page>
      <Global />
      <Title />
      <Toolbar />
      <Main>
        <InspectorPanel />
        <Center>
          <ArrangeView />
          <DeviceChain />
        </Center>
        <BrowserPanel />
      </Main>
      <FooterBar />
    </Page>
  );
}
